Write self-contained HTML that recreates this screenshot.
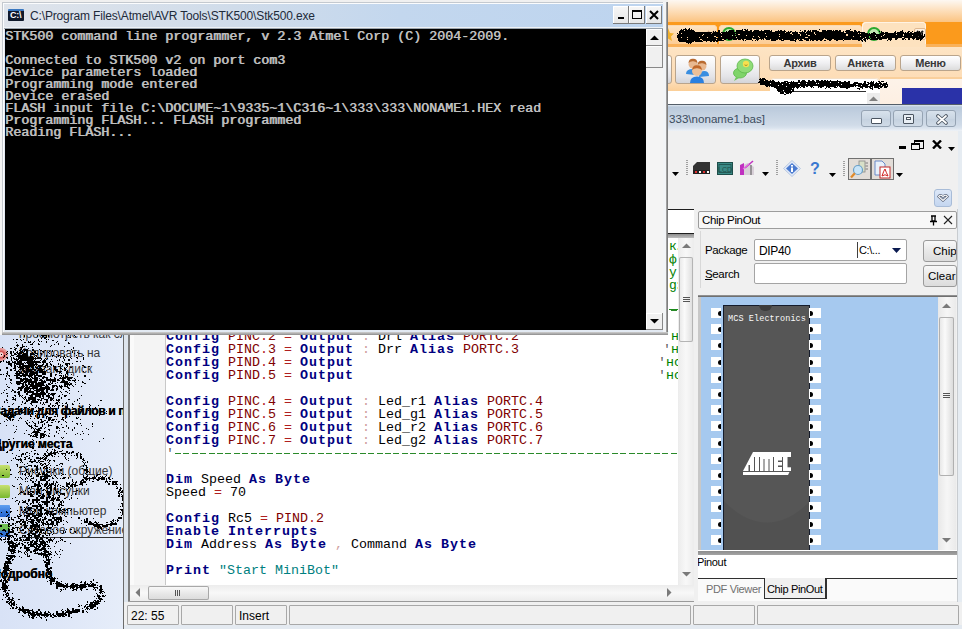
<!DOCTYPE html>
<html><head><meta charset="utf-8">
<style>
*{margin:0;padding:0;box-sizing:border-box}
html,body{width:962px;height:629px;overflow:hidden;background:#ececec;font-family:"Liberation Sans",sans-serif}
.a{position:absolute}
/* left explorer pane */
#xp{left:0;top:300px;width:123px;height:329px;background:linear-gradient(90deg,#d8e2f6,#e0e8f8 60%,#e6edf9);overflow:hidden}
.xt{font-size:12px;color:#383838;white-space:nowrap}
.xh{font:bold 12px "Liberation Sans",sans-serif;color:#000;white-space:nowrap;letter-spacing:0px;text-shadow:0.4px 0 0 #000}
/* editor window */
#ed{left:0;top:0;width:962px;height:629px}
#edtitle{left:544px;top:0;width:294px;height:27px;background:linear-gradient(#d5e2f2,#c7d8ee);border-top:1px solid #8c9cb1}
/* orange app */
#org{left:668px;top:0;width:294px;height:104px;background:#fdeee0}
/* console */
#con{left:0;top:0;width:668px;height:335px;background:#e2e9f2}
#contitle{left:4px;top:4px;width:660px;height:23px;background:linear-gradient(90deg,#dfe4eb 0%,#d0dcea 35%,#c3d7ee 60%,#bdd4ef 100%)}
#conbody{left:5px;top:29px;width:641px;height:301px;background:#000;font-family:"Liberation Mono",monospace;font-weight:normal;text-shadow:0.7px 0 0 #c0c0c0;font-size:13.333px;line-height:12px;color:#c0c0c0;white-space:pre;padding-top:2px}
.tbtn{top:6px;width:16px;height:18px;background:linear-gradient(#f7f7f7,#e6e6e6);box-shadow:inset -1px -1px 0 #7b7b7b,inset 1px 1px 0 #fff,0 0 0 0 #000}
#cscroll{left:646px;top:29px;width:17px;height:301px;background:#f4f4f4}
.sbtn{width:17px;height:17px;background:#f0f0f0;box-shadow:inset -1px -1px 0 #888,inset 1px 1px 0 #fff}

.ebtn{top:110px;width:30px;height:17px;border:1px solid #95a3b3;border-radius:3px;background:linear-gradient(#d8e2ec,#cad6e3 50%,#c4d1df 51%,#d0dbe7)}
#code{font-family:"Liberation Mono",monospace;font-size:13.333px;line-height:13px;color:#000;white-space:pre}
#code .k{color:#000080;font-weight:bold;letter-spacing:1px}
#code .p{color:#800000}
#code .o{color:#b02020}
#code .c{color:#d0a0a0}
#code .g{color:#008000}
#code .s{color:#008080}
#code .ap{color:#606060}
.dl{left:175px;width:503px;height:1px;background:repeating-linear-gradient(90deg,#2a8a2a 0 6px,transparent 6px 8.4px)}
.gc{font:13px "Liberation Mono",monospace;color:#008000;letter-spacing:-2px;white-space:nowrap;line-height:13px}
.sp{top:605px;height:20px;border:1px solid #a8a8a8;border-radius:1px;background:#f0f0f0;font-size:12px;color:#000;padding:3px 0 0 3px;white-space:nowrap}

.otab{top:25px;height:20px;background:linear-gradient(#fde4c4,#fccb92);border-radius:4px 4px 0 0;box-shadow:inset 0 0 0 1px #fbd9b0}
.otab.act{top:22px;height:25px;background:#fde2bf;box-shadow:inset 1px 1px 0 #fff3e3,inset -1px 0 0 #fff3e3}
.obtn{top:55px;height:29px;border-radius:3px;border:1px solid #b9a48c;background:linear-gradient(#ffffff,#f2f2f4 40%,#e4e4e8 75%,#d4d4d8)}
.obtxt{top:55px;height:16px;border-radius:3px;border:1px solid #b9a48c;background:linear-gradient(#ffffff,#f0f0f2 50%,#dcdcdc);font:bold 11px "Liberation Sans",sans-serif;color:#383838;text-align:center;line-height:14px;letter-spacing:-0.2px}

.grip{top:160px;width:2px;height:16px;background:repeating-linear-gradient(#a0a0a0 0 1px,transparent 1px 2px)}
.lbl{font-size:11px;letter-spacing:-0.35px;color:#000;white-space:nowrap}
.pbtn{width:34px;border:1px solid #9a9a9a;border-radius:3px;background:linear-gradient(#f8f8f8,#e8e8e8 50%,#dcdcdc);font-size:11.5px;padding:4px 0 0 8px;white-space:nowrap;overflow:hidden}
.pinl{left:10px;width:10px;height:10px;background:#fff;margin-top:-297px}
.pinl::after{content:"";position:absolute;left:7px;top:2.5px;width:3px;height:5px;border-radius:3px 0 0 3px;background:#000}
.pinr{left:108px;width:12px;height:10px;background:#fff;margin-top:-297px}
.pinr::after{content:"";position:absolute;left:1px;top:2.5px;width:3px;height:5px;border-radius:0 3px 3px 0;background:#000}
</style></head><body>
<div id="xp" class="a">
  <div class="a xt" style="left:19px;top:27px">просмотреть как слайд-шоу</div>
  <div class="a xt" style="left:19px;top:46px">Копировать на</div>
  <div class="a xt" style="left:19px;top:62px">компакт-диск</div>
  <div class="a xh" style="left:-7px;top:104px;letter-spacing:-0.35px">Задачи для файлов и папок</div>
  <div class="a xh" style="left:-7px;top:137px">Другие места</div>
  <div class="a xt" style="left:19px;top:164px">Рисунки (общие)</div>
  <div class="a xt" style="left:19px;top:184px">Мои рисунки</div>
  <div class="a xt" style="left:19px;top:204px">Мой компьютер</div>
  <div class="a xt" style="left:19px;top:223px">Сетевое окружение</div>
  <div class="a" style="left:19px;top:237px;width:104px;height:1px;background:#303030"></div>
  <div class="a xh" style="left:-8px;top:267px">Подробно</div>
  <div class="a" style="left:-6px;top:48px;width:14px;height:13px;border-radius:50%;background:radial-gradient(#f4d0d0 20%,#d04848 30%,#e8a0a0 60%,#c03030)"></div>
  <div class="a" style="left:-6px;top:165px;width:16px;height:13px;border-radius:2px;background:linear-gradient(#c8e070,#78b830)"></div>
  <div class="a" style="left:-6px;top:185px;width:16px;height:13px;border-radius:2px;background:linear-gradient(#c8e070,#78b830)"></div>
  <div class="a" style="left:-6px;top:205px;width:16px;height:12px;border-radius:1px;background:linear-gradient(#60a0f0,#2060d0)"></div>
  <div class="a" style="left:-6px;top:224px;width:16px;height:13px;border-radius:1px;background:linear-gradient(#70c050 40%,#3070d0 60%)"></div>
</div>
<div id="ed" class="a">
  <!-- title bar -->
  <div class="a" style="left:668px;top:104px;width:294px;height:1px;background:#545e69"></div>
  <div class="a" style="left:668px;top:105px;width:294px;height:26px;background:linear-gradient(#dfe7ef 0px,#b9c9db 2px,#c2d0e0 8px,#d0dbe8 20px,#dae3ee 23px,#eef2f7 26px)"></div>
  <div class="a" style="left:669px;top:112px;font-size:11.6px;color:#3b4b5d;white-space:nowrap">333\noname1.bas]</div>
  <div class="a ebtn" style="left:861px"><div class="a" style="left:9px;top:7px;width:11px;height:6px;border:1.5px solid #4a5460;border-radius:1px;background:#fff"></div></div>
  <div class="a ebtn" style="left:893px"><div class="a" style="left:9px;top:3px;width:11px;height:10px;border:1.5px solid #4a5460;border-radius:1px;background:#e8eef4"><div class="a" style="left:2px;top:2px;width:5px;height:3px;border:1px solid #4a5460;background:#fff"></div></div></div>
  <div class="a ebtn" style="left:926px"><svg class="a" style="left:9px;top:3px" width="12" height="11"><path d="M2 2L10 9M10 2L2 9" stroke="#4a5460" stroke-width="3.6" stroke-linecap="round"/><path d="M2 2L10 9M10 2L2 9" stroke="#fff" stroke-width="1.8" stroke-linecap="round"/></svg></div>
  <!-- toolbar -->
  <div class="a" style="left:668px;top:131px;width:290px;height:78px;background:#f0f0f0"></div>
  <div class="a" style="left:958px;top:131px;width:4px;height:498px;background:#e6ecf2"></div>
  <!-- editor body left of console -->
  <div class="a" style="left:123px;top:335px;width:1px;height:294px;background:#6b6b6b"></div>
  <div class="a" style="left:124px;top:335px;width:4px;height:294px;background:#dde4ec"></div>
  <div class="a" style="left:128px;top:209px;width:2px;height:393px;background:#7d7d7d"></div>
  <!-- doc tab strip -->
  <div class="a" style="left:668px;top:209px;width:28px;height:1px;background:#1e1e1e"></div>
  <div class="a" style="left:695px;top:209px;width:1px;height:3px;background:#1e1e1e"></div>
  <div class="a" style="left:668px;top:210px;width:28px;height:23px;background:#fff"></div>
  <div class="a" style="left:130px;top:233px;width:566px;height:1px;background:#1e1e1e"></div>
  <div class="a" style="left:130px;top:234px;width:566px;height:4px;background:linear-gradient(#8e8e8e,#bdbdbd)"></div>
  <!-- gutter and code -->
  <div class="a" style="left:130px;top:238px;width:36px;height:347px;background:#f4f4f4"></div>
  <div class="a" style="left:130px;top:238px;width:4px;height:347px;background:#fafafa"></div>
  <div class="a" style="left:165px;top:238px;width:1px;height:347px;background:#c8c8c8"></div>
  <div class="a" style="left:166px;top:238px;width:512px;height:347px;background:#fff;overflow:hidden">
    <div id="code" class="a" style="left:0;top:1px">




<span class="ap">'</span>

<span class="k">Config</span> <span class="p">PINC</span><span class="o">.</span><span class="p">2</span> <span class="o">=</span> <span class="k">Output</span> <span class="c">:</span> Drl <span class="k">Alias</span> <span class="p">PORTC</span><span class="o">.</span><span class="p">2</span>                  <span class="ap">'</span><span class="g">но</span>
<span class="k">Config</span> <span class="p">PINC</span><span class="o">.</span><span class="p">3</span> <span class="o">=</span> <span class="k">Output</span> <span class="c">:</span> Drr <span class="k">Alias</span> <span class="p">PORTC</span><span class="o">.</span><span class="p">3</span>                  <span class="ap">'</span><span class="g">но</span>
<span class="k">Config</span> <span class="p">PIND</span><span class="o">.</span><span class="p">4</span> <span class="o">=</span> <span class="k">Output</span>                                      <span class="ap">'</span><span class="g">нс</span>
<span class="k">Config</span> <span class="p">PIND</span><span class="o">.</span><span class="p">5</span> <span class="o">=</span> <span class="k">Output</span>                                      <span class="ap">'</span><span class="g">нс</span>

<span class="k">Config</span> <span class="p">PINC</span><span class="o">.</span><span class="p">4</span> <span class="o">=</span> <span class="k">Output</span> <span class="c">:</span> Led_r1 <span class="k">Alias</span> <span class="p">PORTC</span><span class="o">.</span><span class="p">4</span>
<span class="k">Config</span> <span class="p">PINC</span><span class="o">.</span><span class="p">5</span> <span class="o">=</span> <span class="k">Output</span> <span class="c">:</span> Led_g1 <span class="k">Alias</span> <span class="p">PORTC</span><span class="o">.</span><span class="p">5</span>
<span class="k">Config</span> <span class="p">PINC</span><span class="o">.</span><span class="p">6</span> <span class="o">=</span> <span class="k">Output</span> <span class="c">:</span> Led_r2 <span class="k">Alias</span> <span class="p">PORTC</span><span class="o">.</span><span class="p">6</span>
<span class="k">Config</span> <span class="p">PINC</span><span class="o">.</span><span class="p">7</span> <span class="o">=</span> <span class="k">Output</span> <span class="c">:</span> Led_g2 <span class="k">Alias</span> <span class="p">PORTC</span><span class="o">.</span><span class="p">7</span>
<span class="ap">'</span>

<span class="k">Dim</span> Speed <span class="k">As</span> <span class="k">Byte</span>
Speed <span class="o">=</span> 70

<span class="k">Config</span> Rc5 <span class="o">=</span> <span class="p">PIND</span><span class="o">.</span><span class="p">2</span>
<span class="k">Enable</span> <span class="k">Interrupts</span>
<span class="k">Dim</span> Address <span class="k">As</span> <span class="k">Byte</span> <span class="c">,</span> Command <span class="k">As</span> <span class="k">Byte</span>

<span class="k">Print</span> <span class="s">"Start MiniBot"</span></div>
  </div>
  <div class="a gc" style="left:669px;top:240px">к.</div>
  <div class="a gc" style="left:669px;top:253px">ф</div>
  <div class="a gc" style="left:669px;top:266px">у</div>
  <div class="a gc" style="left:669px;top:279px">g:</div>
  <div class="a" style="left:669px;top:309px;width:9px;height:1px;background:#1a8a1a"></div>
  <div class="a dl" style="top:310px"></div>
  <div class="a dl" style="top:453px"></div>
  <!-- vertical scrollbar -->
  <div class="a" style="left:678px;top:238px;width:16px;height:347px;background:linear-gradient(90deg,#ececec,#f8f8f8 50%,#ececec)"></div>
  <svg class="a" style="left:682px;top:243px" width="9" height="5"><path d="M0 5L4.5 0.5L9 5Z" fill="#7a7a7a"/></svg>
  <div class="a" style="left:679px;top:257px;width:14px;height:85px;background:linear-gradient(90deg,#e6e6e6,#fafafa 40%,#dcdcdc);box-shadow:inset 0 0 0 1px #b4b4b4;border-radius:2px"></div>
  <div class="a" style="left:683px;top:297px;width:7px;height:1px;background:#555;box-shadow:0 2px 0 #555,0 4px 0 #555"></div>
  <svg class="a" style="left:682px;top:572px" width="9" height="5"><path d="M0 0L4.5 4.5L9 0Z" fill="#7a7a7a"/></svg>
  <!-- horizontal scrollbar -->
  <div class="a" style="left:130px;top:585px;width:564px;height:16px;background:linear-gradient(#ececec,#f8f8f8 50%,#ececec)"></div>
  <svg class="a" style="left:135px;top:588px" width="5" height="9"><path d="M5 0L0.5 4.5L5 9Z" fill="#7a7a7a"/></svg>
  <div class="a" style="left:148px;top:586px;width:61px;height:14px;background:linear-gradient(#fafafa,#e6e6e6 60%,#dadada);box-shadow:inset 0 0 0 1px #a8a8a8;border-radius:2px"></div>
  <div class="a" style="left:175px;top:590px;width:1px;height:6px;background:#555;box-shadow:2px 0 0 #555,4px 0 0 #555"></div>
  <svg class="a" style="left:667px;top:588px" width="5" height="9"><path d="M0 0L4.5 4.5L0 9Z" fill="#7a7a7a"/></svg>
  <div class="a" style="left:128px;top:601px;width:570px;height:1px;background:#9a9a9a"></div>
  <!-- status bar -->
  <div class="a" style="left:124px;top:602px;width:838px;height:27px;background:#f0f0f0"></div>
  <div class="a sp" style="left:127px;width:52px"><span>22: 55</span></div>
  <div class="a sp" style="left:181px;width:52px"></div>
  <div class="a sp" style="left:235px;width:52px"><span>Insert</span></div>
  <div class="a sp" style="left:289px;width:402px"></div>
  <div class="a sp" style="left:693px;width:62px"></div>
  <div class="a sp" style="left:757px;width:202px"></div>
  <div class="a" style="left:124px;top:625px;width:838px;height:4px;background:#e4eaf1"></div>
  <!-- toolbar icons -->
  <svg class="a" style="left:672px;top:172px" width="7" height="4"><path d="M0 0H7L3.5 4Z" fill="#000"/></svg>
  <div class="a grip" style="left:686px"></div>
  <svg class="a" style="left:693px;top:162px" width="18" height="13" viewBox="0 0 18 13"><path d="M4 0H17V8H0V4Z" fill="#333"/><path d="M0 8H17V12H0Z" fill="#222"/><rect x="2" y="9" width="2" height="2" fill="#e03030"/><rect x="6" y="9" width="2" height="2" fill="#fff"/><rect x="10" y="9" width="2" height="2" fill="#e03030"/><rect x="14" y="9" width="2" height="2" fill="#fff"/></svg>
  <svg class="a" style="left:717px;top:162px" width="16" height="13" viewBox="0 0 16 13"><rect x="0.5" y="0.5" width="15" height="12" fill="#3a8a86" stroke="#1e4e4a"/><rect x="2" y="2.5" width="12" height="8" fill="none" stroke="#1e4e4a" stroke-width="0.8"/><text x="8" y="9.5" font-size="7" font-family="Liberation Sans" text-anchor="middle" fill="#1e4e4a">LCD</text></svg>
  <svg class="a" style="left:739px;top:160px" width="17" height="16" viewBox="0 0 17 16"><path d="M1 6L9 3L15 7V15H3Z" fill="#d8d0d8"/><path d="M1 5L5 3V15H1Z" fill="#c030c0"/><path d="M6 8L14 1" stroke="#c030c0" stroke-width="1.5"/><path d="M12 5V15" stroke="#555" stroke-width="1"/><path d="M4 9L10 4" stroke="#e070e0" stroke-width="1.2"/></svg>
  <svg class="a" style="left:762px;top:172px" width="7" height="4"><path d="M0 0H7L3.5 4Z" fill="#000"/></svg>
  <div class="a grip" style="left:776px"></div>
  <svg class="a" style="left:783px;top:160px" width="18" height="17" viewBox="0 0 18 17"><path d="M9 0.5L17.5 8.5L9 16.5L0.5 8.5Z" fill="#dfe8f8" stroke="#b8c8e0"/><path d="M9 3L15 8.5L9 14L3 8.5Z" fill="#4a7ad0"/><rect x="8" y="7.5" width="2" height="4.5" fill="#fff"/><rect x="8" y="5" width="2" height="1.6" fill="#fff"/></svg>
  <div class="a" style="left:810px;top:160px;font:bold 16px 'Liberation Sans',sans-serif;color:#3a78d0">?</div>
  <svg class="a" style="left:829px;top:173px" width="7" height="4"><path d="M0 0H7L3.5 4Z" fill="#000"/></svg>
  <div class="a grip" style="left:843px;top:161px"></div>
  <div class="a" style="left:848px;top:158px;width:23px;height:22px;background:#e2ddd8;border:1px solid #707070"></div>
  <svg class="a" style="left:850px;top:160px" width="19" height="19" viewBox="0 0 19 19"><rect x="9" y="1" width="6" height="11" fill="#d8e0c8" stroke="#888" stroke-width="0.8"/><path d="M15.5 3H18M15.5 6H18M15.5 9H18" stroke="#666" stroke-width="0.8"/><circle cx="8" cy="10" r="4.5" fill="#c8e4f8" stroke="#6aa0c8" stroke-width="1.2"/><path d="M4.8 13.2L1 17.5" stroke="#e08a2a" stroke-width="2.2"/></svg>
  <div class="a" style="left:871px;top:158px;width:23px;height:22px;background:#e2ddd8;border:1px solid #707070"></div>
  <svg class="a" style="left:873px;top:160px" width="19" height="19" viewBox="0 0 19 19"><path d="M2 1H9L12 4V15H2Z" fill="#e8f0fa" stroke="#6a8ac8"/><rect x="7" y="7" width="10" height="11" fill="#fff" stroke="#c02828"/><path d="M9 16Q11 10 12 9Q13 12 15 16Q12 13.5 9 16Z" fill="none" stroke="#d02020" stroke-width="1"/></svg>
  <svg class="a" style="left:896px;top:173px" width="7" height="4"><path d="M0 0H7L3.5 4Z" fill="#000"/></svg>
  <!-- mdi buttons -->
  <div class="a" style="left:899px;top:146px;width:7px;height:3px;background:#000"></div>
  <div class="a" style="left:914px;top:140px;width:10px;height:9px;border:1.5px solid #000;border-top-width:2px;background:#f0f0f0"></div>
  <div class="a" style="left:911px;top:143px;width:9px;height:7px;border:1.5px solid #000;border-top-width:2px;background:#f0f0f0"></div>
  <svg class="a" style="left:932px;top:140px" width="10" height="9"><path d="M1 0.5L9 8.5M9 0.5L1 8.5" stroke="#000" stroke-width="2.4"/></svg>
  <svg class="a" style="left:948px;top:147px" width="7" height="4"><path d="M0 0H7L3.5 4Z" fill="#000"/></svg>
  <div class="a" style="left:934px;top:189px;width:18px;height:18px;border-radius:3px;background:linear-gradient(#dde8f8,#c4d6f0);border:1px solid #a8bcd8"></div>
  <svg class="a" style="left:937px;top:193px" width="12" height="9"><path d="M1.5 3.5Q3 1 6 3.5Q9 1 10.5 3.5L6 7.5Z" fill="none" stroke="#5a6478" stroke-width="2.4"/><path d="M1.5 3.5Q3 1 6 3.5Q9 1 10.5 3.5L6 7.5Z" fill="none" stroke="#fff" stroke-width="1.1"/></svg>
  <!-- chip pinout panel -->
  <div class="a" style="left:698px;top:209px;width:260px;height:393px;background:#f0f0f0"></div>
  <div class="a" style="left:698px;top:211px;width:259px;height:18px;background:#f7f7f7;border:1px solid #9c9c9c;border-radius:2px"></div>
  <div class="a lbl" style="left:702px;top:214px;font-size:11.5px">Chip PinOut</div>
  <svg class="a" style="left:929px;top:215px" width="9" height="11"><path d="M2 1H7M3 1V6H6V1M1 6.5H8M4.5 6.5V10.5" stroke="#000" stroke-width="1.3" fill="none"/></svg>
  <svg class="a" style="left:943px;top:215px" width="10" height="10"><path d="M1 1L9 9M9 1L1 9" stroke="#222" stroke-width="1.1"/></svg>
  <div class="a" style="left:700px;top:231px;width:1px;height:66px;background:#d8d8d8"></div>
  <div class="a lbl" style="left:705px;top:244px;font-size:11.5px">Package</div>
  <div class="a lbl" style="left:705px;top:268px;font-size:11.5px"><u>S</u>earch</div>
  <div class="a" style="left:754px;top:239px;width:153px;height:22px;background:#fff;border:1px solid #a4a4a4;border-radius:2px"></div>
  <div class="a lbl" style="left:759px;top:244px;font-size:12px">DIP40</div>
  <div class="a" style="left:857px;top:242px;width:1px;height:16px;background:#404040"></div>
  <div class="a lbl" style="left:859px;top:244px">C:\...</div>
  <svg class="a" style="left:892px;top:248px" width="9" height="5"><path d="M0 0H9L4.5 5Z" fill="#0a1a50"/></svg>
  <div class="a" style="left:754px;top:263px;width:153px;height:21px;background:#fff;border:1px solid #a4a4a4;border-radius:2px"></div>
  <div class="a pbtn" style="left:923px;top:240px;height:22px;padding-left:9px">Chip</div>
  <div class="a pbtn" style="left:923px;top:265px;height:22px;padding-left:4px">Clear</div>
  <div class="a" style="left:698px;top:288px;width:260px;height:8px;background:#f0f0f0"></div>
  <div class="a" style="left:698px;top:295px;width:259px;height:2px;background:linear-gradient(#a0a0a0,#606060)"></div>
  <!-- chip view -->
  <div class="a" style="left:698px;top:297px;width:3px;height:254px;background:#c8c8c8"></div>
  <div class="a" style="left:701px;top:297px;width:237px;height:253px;background:#a6c9ef;overflow:hidden">
    <div class="a" style="left:22px;top:8px;width:87px;height:260px;background:radial-gradient(ellipse 100px 222px at 43px -5px,#565656 99.5%,#515151 100%);border:1px solid #151c2c;border-bottom:none"></div>
    <div class="a" style="left:58px;top:8px;width:13px;height:6px;border-radius:0 0 7px 7px;background:#3c3c3c"></div>
    <div class="a" style="left:27px;top:17px;font:8.5px 'Liberation Mono',monospace;color:#fafafa;letter-spacing:0.1px;white-space:nowrap">MCS Electronics</div>
    <svg class="a" style="left:42px;top:155px" width="49" height="24" viewBox="0 0 49 24">
      <path d="M10 0H48V19H0Z" fill="#fff"/>

      <path d="M5.5 13H7V19H5.5Z" fill="#555"/>
      <path d="M11 5H12V19H11ZM16 5H17V19H16ZM20.5 7H21.5V19H20.5ZM25.5 7H26.5V19H25.5ZM30 5H31V19H30ZM39 5H40V19H39Z" fill="#555"/>
      <path d="M35 8.5H39V10H35ZM35 13.5H39V15H35Z" fill="#555"/>
      <path d="M44.5 5H48V15.3H44.5Z" fill="#555"/>
      <path d="M0 20H46.5L45 23H0Z" fill="#fff"/>
    </svg>
    <div class="a pinl" style="top:308px"></div><div class="a pinr" style="top:308px"></div>
<div class="a pinl" style="top:324px"></div><div class="a pinr" style="top:324px"></div>
<div class="a pinl" style="top:340px"></div><div class="a pinr" style="top:340px"></div>
<div class="a pinl" style="top:357px"></div><div class="a pinr" style="top:357px"></div>
<div class="a pinl" style="top:373px"></div><div class="a pinr" style="top:373px"></div>
<div class="a pinl" style="top:389px"></div><div class="a pinr" style="top:389px"></div>
<div class="a pinl" style="top:405px"></div><div class="a pinr" style="top:405px"></div>
<div class="a pinl" style="top:421px"></div><div class="a pinr" style="top:421px"></div>
<div class="a pinl" style="top:438px"></div><div class="a pinr" style="top:438px"></div>
<div class="a pinl" style="top:454px"></div><div class="a pinr" style="top:454px"></div>
<div class="a pinl" style="top:470px"></div><div class="a pinr" style="top:470px"></div>
<div class="a pinl" style="top:486px"></div><div class="a pinr" style="top:486px"></div>
<div class="a pinl" style="top:502px"></div><div class="a pinr" style="top:502px"></div>
<div class="a pinl" style="top:519px"></div><div class="a pinr" style="top:519px"></div>
<div class="a pinl" style="top:535px"></div><div class="a pinr" style="top:535px"></div>
  </div>
  <div class="a" style="left:938px;top:297px;width:18px;height:253px;background:linear-gradient(90deg,#e8e8e8,#f6f6f6 50%,#eaeaea)"></div>
  <svg class="a" style="left:942px;top:303px" width="9" height="5"><path d="M0 5L4.5 0.5L9 5Z" fill="#7a7a7a"/></svg>
  <div class="a" style="left:939px;top:317px;width:15px;height:159px;background:linear-gradient(90deg,#e4e4e4,#fafafa 40%,#d8d8d8);box-shadow:inset 0 0 0 1px #b0b0b0;border-radius:2px"></div>
  <div class="a" style="left:943px;top:393px;width:7px;height:1px;background:#555;box-shadow:0 2px 0 #555,0 4px 0 #555"></div>
  <svg class="a" style="left:942px;top:538px" width="9" height="5"><path d="M0 0L4.5 4.5L9 0Z" fill="#7a7a7a"/></svg>
  <div class="a" style="left:698px;top:550px;width:259px;height:1px;background:#fff"></div>
  <div class="a" style="left:698px;top:551px;width:259px;height:4px;background:linear-gradient(#8c8c8c,#a4a4a4)"></div>
  <div class="a" style="left:697px;top:555px;width:260px;height:24px;background:#fff"></div>
  <div class="a lbl" style="left:697px;top:556px">Pinout</div>
  <div class="a" style="left:697px;top:578px;width:67px;height:1px;background:#303030"></div>
  <div class="a" style="left:826px;top:578px;width:131px;height:1px;background:#303030"></div>
  <div class="a" style="left:697px;top:579px;width:260px;height:22px;background:#fafafa"></div>
  <div class="a lbl" style="left:706px;top:583px;color:#707070">PDF Viewer</div>
  <div class="a" style="left:764px;top:578px;width:63px;height:21px;background:#f0f0f0;border-left:1px solid #303030;border-right:2px solid #303030;border-bottom:1px solid #303030"></div>
  <div class="a lbl" style="left:767px;top:583px">Chip PinOut</div>
  <div class="a" style="left:957px;top:209px;width:1px;height:393px;background:#c8ccd0"></div>
  <!-- splitter -->
  <div class="a" style="left:694px;top:209px;width:4px;height:393px;background:#f0f0f0"></div>
</div>
<div id="org" class="a">
  <div class="a" style="left:0;top:0;width:294px;height:23px;background:linear-gradient(#fdf8f2,#fde2c2 40%,#fbc482 95%)"></div>
  <div class="a" style="left:0;top:22px;width:294px;height:24px;background:#fb9a1c"></div>
  <!-- tabs -->
  <div class="a otab" style="left:-6px;width:55px"></div>
  <div class="a otab" style="left:51px;width:143px"></div>
  <div class="a otab act" style="left:194px;width:64px"></div>
  <div class="a" style="left:0;top:44px;width:294px;height:3px;background:#f9b15a"></div>
  <div class="a" style="left:194px;top:44px;width:64px;height:3px;background:#fde2bf"></div>
  <div class="a" style="left:0;top:47px;width:294px;height:44px;background:linear-gradient(#fde4c4,#fddcb5 80%,#fbcf98)"></div>
  <!-- star -->
  <svg class="a" style="left:-6px;top:27px" width="12" height="14"><path d="M6 1L8 6L12 6.5L9 9.5L10 14L6 11.5L2 14L3 9.5L0 6.5L4 6Z" fill="#f2b02a"/></svg>
  <svg class="a" style="left:38px;top:29px" width="10" height="10"><path d="M2 2L8 8M8 2L2 8" stroke="#c8a080" stroke-width="1.5"/></svg>
  <!-- green icon -->
  <div class="a" style="left:54px;top:27px;width:14px;height:14px;border-radius:50%;border:2.5px solid #2aa830;background:radial-gradient(#2aa830 25%,#bfe8b0 30%)"></div>
  <div class="a" style="left:199px;top:27px;width:14px;height:14px;border-radius:50%;border:2.5px solid #2aa830;background:radial-gradient(#2aa830 25%,#bfe8b0 30%)"></div>
  <div class="a" style="left:246px;top:28px;width:12px;height:12px;border:1px solid #e0b890;border-radius:2px;background:#fdf0e0"></div>
  <svg class="a" style="left:247px;top:29px" width="10" height="10"><path d="M2 2L8 8M8 2L2 8" stroke="#202020" stroke-width="2"/></svg>
  <!-- buttons -->
  <div class="a obtn" style="left:-10px;width:14px"></div>
  <div class="a obtn" style="left:7px;width:41px"></div>
  <div class="a obtn" style="left:52px;width:40px"></div>
  <div class="a obtxt" style="left:101px;width:62px">Архив</div>
  <div class="a obtxt" style="left:167px;width:61px">Анкета</div>
  <div class="a obtxt" style="left:232px;width:61px">Меню</div>
  <!-- people icon -->
  <svg class="a" style="left:17px;top:57px" width="24" height="26" viewBox="0 0 24 26">
    <circle cx="8" cy="7" r="4.5" fill="#e8b890"/><path d="M3.5 6Q4 1.5 8 1.8Q12 1.5 12.5 6Q10 4 8 4.2Q5 4 3.5 6Z" fill="#b86a30"/>
    <path d="M1 17Q1 12 8 12Q11 12 12 14L10 18Z" fill="#3a8ee0"/>
    <circle cx="17" cy="9" r="4.5" fill="#e8b890"/><path d="M12.5 8Q13 3.5 17 3.8Q21 3.5 21.5 8Q19 6 17 6.2Q14 6 12.5 8Z" fill="#b86a30"/>
    <path d="M14 20Q14 14 19 14Q24 14 24 19Z" fill="#3a8ee0"/>
    <circle cx="12" cy="14" r="5" fill="#edc098"/><path d="M7 13Q7.5 8 12 8.3Q16.5 8 17 13Q14.5 11 12 11.2Q9 11 7 13Z" fill="#c0682a"/>
    <path d="M5 26Q5 19.5 12 19.5Q19 19.5 19 26Z" fill="#2a80e0"/>
  </svg>
  <!-- chat icon -->
  <svg class="a" style="left:64px;top:58px" width="22" height="24" viewBox="0 0 22 24">
    <ellipse cx="8" cy="15" rx="6.5" ry="5" fill="#7fd46a" stroke="#5cb84a" stroke-width="0.8"/>
    <path d="M4 19L2 23L7 20Z" fill="#6cc85a"/>
    <ellipse cx="13" cy="8" rx="8" ry="7" fill="#90dc78" stroke="#5cb84a" stroke-width="0.8"/>
    <circle cx="14" cy="6" r="3.2" fill="#f6e050"/>
    <path d="M12.5 6.8Q14 8.3 15.5 6.8" stroke="#8a6a10" stroke-width="0.7" fill="none"/>
  </svg>
  <!-- scribbled input -->
  <div class="a" style="left:0;top:91px;width:294px;height:13px;background:#fff"></div>
  <div class="a" style="left:212px;top:77px;width:82px;height:2px;background:#f9cf9c"></div>
  <div class="a" style="left:212px;top:79px;width:82px;height:25px;background:linear-gradient(#fdf3e9,#fdefe2)"></div>
  <div class="a" style="left:234px;top:88px;width:60px;height:16px;background:#2a32a8"></div>
  <div class="a" style="left:102px;top:78px;width:110px;height:26px;background:#fff;border-radius:5px 5px 0 0;box-shadow:inset 0 1px 0 #f4e0c8"></div>
  <div class="a" style="left:112px;top:91px;width:86px;height:1px;background:#303030"></div>
  <div class="a" style="left:199px;top:93px;width:13px;height:11px;background:#ececec"></div>
  <svg class="a" style="left:201px;top:96px" width="9" height="5"><path d="M0 5L4.5 0.5L9 5Z" fill="#808080"/></svg>
  <div class="a" style="left:0;top:104px;width:294px;height:1px;background:#545e69"></div>
</div>
<svg class="a" id="scrib" style="left:0;top:0" width="962" height="629"><path d="M12 333h1v1h-1zM40 333h10v1h-10zM40 334h9v1h-9zM65 334h1v1h-1zM24 335h1v1h-1zM37 335h1v1h-1zM41 335h6v1h-6zM48 335h1v1h-1zM68 335h1v1h-1zM74 335h1v1h-1zM24 336h1v1h-1zM37 336h1v1h-1zM42 336h2v1h-2zM46 336h1v1h-1zM48 336h1v1h-1zM75 336h1v1h-1zM44 337h3v1h-3zM70 337h1v1h-1zM41 338h1v1h-1zM44 338h2v1h-2zM13 339h1v1h-1zM16 339h2v1h-2zM20 339h1v1h-1zM23 339h1v1h-1zM38 339h1v1h-1zM46 339h1v1h-1zM48 339h1v1h-1zM21 340h1v1h-1zM38 340h1v1h-1zM52 340h2v1h-2zM65 340h1v1h-1zM28 341h1v1h-1zM30 341h1v1h-1zM34 341h1v1h-1zM39 341h1v1h-1zM41 341h1v1h-1zM46 341h1v1h-1zM57 341h1v1h-1zM16 342h1v1h-1zM24 342h2v1h-2zM28 342h3v1h-3zM33 342h1v1h-1zM46 342h1v1h-1zM56 342h1v1h-1zM68 342h1v1h-1zM32 343h1v1h-1zM38 343h1v1h-1zM58 343h1v1h-1zM68 343h2v1h-2zM17 344h1v1h-1zM22 344h1v1h-1zM30 344h3v1h-3zM38 344h2v1h-2zM54 344h1v1h-1zM58 344h1v1h-1zM16 345h3v1h-3zM22 345h1v1h-1zM51 345h1v1h-1zM17 346h1v1h-1zM22 346h3v1h-3zM26 346h1v1h-1zM50 346h1v1h-1zM64 346h1v1h-1zM2 347h1v1h-1zM14 347h1v1h-1zM20 347h3v1h-3zM32 347h1v1h-1zM73 347h1v1h-1zM10 348h2v1h-2zM15 348h2v1h-2zM21 348h1v1h-1zM28 348h1v1h-1zM73 348h1v1h-1zM14 349h2v1h-2zM20 349h2v1h-2zM23 349h5v1h-5zM32 349h2v1h-2zM39 349h1v1h-1zM71 349h1v1h-1zM15 350h1v1h-1zM19 350h2v1h-2zM22 350h1v1h-1zM24 350h4v1h-4zM32 350h2v1h-2zM40 350h2v1h-2zM45 350h1v1h-1zM52 350h1v1h-1zM67 350h1v1h-1zM7 351h1v1h-1zM10 351h2v1h-2zM13 351h1v1h-1zM17 351h1v1h-1zM20 351h3v1h-3zM24 351h1v1h-1zM26 351h2v1h-2zM34 351h2v1h-2zM42 351h2v1h-2zM49 351h1v1h-1zM52 351h1v1h-1zM72 351h1v1h-1zM6 352h1v1h-1zM10 352h2v1h-2zM13 352h1v1h-1zM16 352h2v1h-2zM19 352h5v1h-5zM26 352h2v1h-2zM32 352h1v1h-1zM34 352h2v1h-2zM43 352h1v1h-1zM48 352h1v1h-1zM72 352h1v1h-1zM77 352h1v1h-1zM7 353h1v1h-1zM10 353h2v1h-2zM14 353h2v1h-2zM17 353h5v1h-5zM23 353h5v1h-5zM30 353h4v1h-4zM35 353h3v1h-3zM40 353h2v1h-2zM49 353h1v1h-1zM74 353h1v1h-1zM78 353h2v1h-2zM1 354h1v1h-1zM6 354h1v1h-1zM11 354h1v1h-1zM14 354h3v1h-3zM18 354h2v1h-2zM22 354h6v1h-6zM30 354h5v1h-5zM37 354h1v1h-1zM41 354h1v1h-1zM56 354h1v1h-1zM4 355h1v1h-1zM11 355h3v1h-3zM17 355h11v1h-11zM30 355h1v1h-1zM35 355h2v1h-2zM46 355h1v1h-1zM52 355h2v1h-2zM58 355h2v1h-2zM64 355h1v1h-1zM76 355h1v1h-1zM83 355h1v1h-1zM4 356h1v1h-1zM10 356h1v1h-1zM16 356h12v1h-12zM30 356h3v1h-3zM34 356h1v1h-1zM36 356h1v1h-1zM46 356h1v1h-1zM52 356h1v1h-1zM58 356h1v1h-1zM64 356h1v1h-1zM67 356h1v1h-1zM3 357h1v1h-1zM6 357h2v1h-2zM11 357h1v1h-1zM13 357h1v1h-1zM18 357h16v1h-16zM35 357h1v1h-1zM37 357h4v1h-4zM56 357h1v1h-1zM60 357h1v1h-1zM63 357h1v1h-1zM65 357h1v1h-1zM70 357h1v1h-1zM76 357h2v1h-2zM83 357h1v1h-1zM7 358h1v1h-1zM11 358h1v1h-1zM13 358h2v1h-2zM16 358h1v1h-1zM18 358h24v1h-24zM45 358h1v1h-1zM47 358h1v1h-1zM63 358h1v1h-1zM71 358h1v1h-1zM77 358h1v1h-1zM83 358h1v1h-1zM11 359h1v1h-1zM14 359h5v1h-5zM20 359h14v1h-14zM35 359h1v1h-1zM41 359h1v1h-1zM44 359h1v1h-1zM46 359h1v1h-1zM51 359h1v1h-1zM59 359h1v1h-1zM64 359h1v1h-1zM68 359h2v1h-2zM83 359h1v1h-1zM3 360h1v1h-1zM11 360h1v1h-1zM16 360h2v1h-2zM19 360h14v1h-14zM34 360h1v1h-1zM40 360h1v1h-1zM43 360h3v1h-3zM57 360h1v1h-1zM59 360h1v1h-1zM64 360h1v1h-1zM68 360h2v1h-2zM0 361h2v1h-2zM3 361h1v1h-1zM6 361h1v1h-1zM8 361h2v1h-2zM12 361h1v1h-1zM14 361h2v1h-2zM17 361h5v1h-5zM27 361h13v1h-13zM42 361h4v1h-4zM50 361h1v1h-1zM52 361h1v1h-1zM62 361h1v1h-1zM76 361h2v1h-2zM80 361h1v1h-1zM0 362h1v1h-1zM6 362h4v1h-4zM12 362h4v1h-4zM17 362h5v1h-5zM24 362h1v1h-1zM26 362h15v1h-15zM42 362h4v1h-4zM49 362h1v1h-1zM63 362h1v1h-1zM8 363h4v1h-4zM14 363h10v1h-10zM25 363h1v1h-1zM27 363h7v1h-7zM35 363h2v1h-2zM43 363h1v1h-1zM46 363h2v1h-2zM50 363h1v1h-1zM58 363h1v1h-1zM65 363h5v1h-5zM72 363h1v1h-1zM8 364h4v1h-4zM14 364h1v1h-1zM16 364h8v1h-8zM28 364h10v1h-10zM42 364h2v1h-2zM46 364h2v1h-2zM50 364h2v1h-2zM58 364h1v1h-1zM60 364h1v1h-1zM65 364h3v1h-3zM69 364h1v1h-1zM10 365h2v1h-2zM14 365h2v1h-2zM19 365h2v1h-2zM22 365h13v1h-13zM36 365h1v1h-1zM38 365h5v1h-5zM45 365h3v1h-3zM51 365h1v1h-1zM53 365h1v1h-1zM60 365h1v1h-1zM62 365h1v1h-1zM66 365h2v1h-2zM82 365h2v1h-2zM11 366h1v1h-1zM14 366h2v1h-2zM17 366h1v1h-1zM19 366h15v1h-15zM35 366h1v1h-1zM38 366h4v1h-4zM44 366h2v1h-2zM47 366h1v1h-1zM53 366h3v1h-3zM58 366h2v1h-2zM67 366h1v1h-1zM84 366h1v1h-1zM88 366h2v1h-2zM6 367h2v1h-2zM14 367h2v1h-2zM18 367h6v1h-6zM25 367h5v1h-5zM31 367h3v1h-3zM35 367h3v1h-3zM39 367h2v1h-2zM45 367h1v1h-1zM54 367h2v1h-2zM60 367h1v1h-1zM64 367h1v1h-1zM66 367h1v1h-1zM70 367h2v1h-2zM84 367h2v1h-2zM6 368h2v1h-2zM13 368h3v1h-3zM20 368h5v1h-5zM26 368h3v1h-3zM32 368h2v1h-2zM36 368h6v1h-6zM44 368h1v1h-1zM49 368h1v1h-1zM54 368h2v1h-2zM60 368h2v1h-2zM64 368h2v1h-2zM0 369h1v1h-1zM10 369h2v1h-2zM15 369h1v1h-1zM19 369h2v1h-2zM22 369h2v1h-2zM26 369h10v1h-10zM38 369h6v1h-6zM54 369h4v1h-4zM62 369h1v1h-1zM65 369h1v1h-1zM0 370h1v1h-1zM10 370h2v1h-2zM14 370h2v1h-2zM18 370h1v1h-1zM22 370h3v1h-3zM26 370h6v1h-6zM34 370h2v1h-2zM37 370h6v1h-6zM46 370h1v1h-1zM55 370h3v1h-3zM64 370h2v1h-2zM67 370h1v1h-1zM7 371h1v1h-1zM16 371h4v1h-4zM21 371h1v1h-1zM23 371h11v1h-11zM36 371h2v1h-2zM39 371h7v1h-7zM56 371h6v1h-6zM66 371h2v1h-2zM83 371h1v1h-1zM7 372h1v1h-1zM16 372h2v1h-2zM19 372h3v1h-3zM24 372h4v1h-4zM30 372h8v1h-8zM39 372h7v1h-7zM59 372h2v1h-2zM66 372h2v1h-2zM6 373h2v1h-2zM15 373h9v1h-9zM25 373h3v1h-3zM29 373h9v1h-9zM42 373h4v1h-4zM50 373h2v1h-2zM59 373h1v1h-1zM61 373h1v1h-1zM66 373h2v1h-2zM0 374h2v1h-2zM3 374h1v1h-1zM7 374h1v1h-1zM16 374h4v1h-4zM22 374h6v1h-6zM29 374h6v1h-6zM36 374h2v1h-2zM42 374h4v1h-4zM50 374h2v1h-2zM55 374h2v1h-2zM65 374h1v1h-1zM67 374h1v1h-1zM71 374h1v1h-1zM6 375h1v1h-1zM8 375h2v1h-2zM14 375h19v1h-19zM34 375h8v1h-8zM50 375h2v1h-2zM55 375h1v1h-1zM59 375h3v1h-3zM63 375h1v1h-1zM65 375h1v1h-1zM84 375h2v1h-2zM6 376h1v1h-1zM9 376h1v1h-1zM16 376h2v1h-2zM20 376h2v1h-2zM23 376h3v1h-3zM28 376h4v1h-4zM34 376h2v1h-2zM38 376h4v1h-4zM43 376h2v1h-2zM50 376h2v1h-2zM61 376h1v1h-1zM63 376h1v1h-1zM65 376h3v1h-3zM77 376h1v1h-1zM84 376h2v1h-2zM16 377h4v1h-4zM25 377h1v1h-1zM29 377h1v1h-1zM31 377h2v1h-2zM34 377h4v1h-4zM42 377h6v1h-6zM54 377h1v1h-1zM60 377h1v1h-1zM62 377h11v1h-11zM5 378h1v1h-1zM9 378h1v1h-1zM16 378h6v1h-6zM23 378h5v1h-5zM30 378h1v1h-1zM32 378h6v1h-6zM39 378h1v1h-1zM42 378h2v1h-2zM46 378h2v1h-2zM50 378h1v1h-1zM54 378h2v1h-2zM59 378h7v1h-7zM67 378h5v1h-5zM74 378h1v1h-1zM5 379h1v1h-1zM10 379h2v1h-2zM20 379h12v1h-12zM34 379h4v1h-4zM40 379h2v1h-2zM46 379h10v1h-10zM57 379h2v1h-2zM62 379h2v1h-2zM67 379h3v1h-3zM75 379h1v1h-1zM89 379h1v1h-1zM10 380h2v1h-2zM20 380h4v1h-4zM25 380h7v1h-7zM34 380h4v1h-4zM39 380h4v1h-4zM44 380h1v1h-1zM46 380h10v1h-10zM57 380h3v1h-3zM62 380h3v1h-3zM68 380h3v1h-3zM72 380h4v1h-4zM78 380h1v1h-1zM16 381h7v1h-7zM24 381h13v1h-13zM41 381h5v1h-5zM50 381h1v1h-1zM52 381h4v1h-4zM61 381h7v1h-7zM74 381h1v1h-1zM82 381h1v1h-1zM10 382h1v1h-1zM16 382h5v1h-5zM23 382h4v1h-4zM28 382h9v1h-9zM38 382h8v1h-8zM50 382h1v1h-1zM52 382h1v1h-1zM57 382h1v1h-1zM60 382h8v1h-8zM69 382h1v1h-1zM75 382h1v1h-1zM82 382h2v1h-2zM11 383h1v1h-1zM16 383h8v1h-8zM25 383h1v1h-1zM28 383h2v1h-2zM31 383h3v1h-3zM35 383h9v1h-9zM48 383h2v1h-2zM51 383h2v1h-2zM55 383h1v1h-1zM64 383h5v1h-5zM70 383h2v1h-2zM84 383h2v1h-2zM6 384h1v1h-1zM17 384h3v1h-3zM22 384h2v1h-2zM25 384h2v1h-2zM28 384h6v1h-6zM35 384h9v1h-9zM46 384h1v1h-1zM48 384h3v1h-3zM64 384h8v1h-8zM75 384h1v1h-1zM22 385h2v1h-2zM25 385h3v1h-3zM30 385h15v1h-15zM46 385h2v1h-2zM52 385h5v1h-5zM59 385h1v1h-1zM61 385h1v1h-1zM64 385h2v1h-2zM67 385h1v1h-1zM69 385h1v1h-1zM72 385h1v1h-1zM7 386h1v1h-1zM21 386h4v1h-4zM26 386h2v1h-2zM29 386h13v1h-13zM45 386h4v1h-4zM52 386h3v1h-3zM56 386h2v1h-2zM59 386h4v1h-4zM64 386h4v1h-4zM73 386h1v1h-1zM81 386h1v1h-1zM8 387h2v1h-2zM18 387h6v1h-6zM25 387h5v1h-5zM32 387h6v1h-6zM40 387h10v1h-10zM52 387h2v1h-2zM57 387h1v1h-1zM60 387h2v1h-2zM67 387h2v1h-2zM18 388h5v1h-5zM24 388h14v1h-14zM39 388h11v1h-11zM52 388h1v1h-1zM56 388h2v1h-2zM61 388h1v1h-1zM68 388h2v1h-2zM6 389h1v1h-1zM12 389h1v1h-1zM17 389h2v1h-2zM20 389h2v1h-2zM24 389h5v1h-5zM30 389h1v1h-1zM33 389h1v1h-1zM36 389h9v1h-9zM46 389h4v1h-4zM51 389h3v1h-3zM56 389h2v1h-2zM63 389h1v1h-1zM4 390h1v1h-1zM12 390h2v1h-2zM20 390h2v1h-2zM24 390h4v1h-4zM29 390h2v1h-2zM34 390h10v1h-10zM46 390h2v1h-2zM50 390h4v1h-4zM56 390h1v1h-1zM69 390h1v1h-1zM11 391h1v1h-1zM14 391h2v1h-2zM18 391h2v1h-2zM24 391h10v1h-10zM36 391h4v1h-4zM41 391h3v1h-3zM46 391h2v1h-2zM60 391h1v1h-1zM65 391h2v1h-2zM78 391h1v1h-1zM3 392h1v1h-1zM14 392h2v1h-2zM17 392h3v1h-3zM24 392h2v1h-2zM27 392h7v1h-7zM36 392h2v1h-2zM40 392h5v1h-5zM46 392h2v1h-2zM61 392h1v1h-1zM67 392h1v1h-1zM1 393h1v1h-1zM6 393h2v1h-2zM18 393h2v1h-2zM26 393h2v1h-2zM32 393h14v1h-14zM48 393h2v1h-2zM51 393h5v1h-5zM69 393h1v1h-1zM18 394h2v1h-2zM26 394h2v1h-2zM31 394h15v1h-15zM48 394h1v1h-1zM50 394h5v1h-5zM62 394h1v1h-1zM7 395h1v1h-1zM14 395h2v1h-2zM19 395h2v1h-2zM22 395h1v1h-1zM29 395h4v1h-4zM35 395h6v1h-6zM42 395h2v1h-2zM46 395h4v1h-4zM52 395h2v1h-2zM59 395h1v1h-1zM64 395h3v1h-3zM81 395h1v1h-1zM7 396h1v1h-1zM15 396h1v1h-1zM19 396h1v1h-1zM21 396h1v1h-1zM25 396h1v1h-1zM30 396h3v1h-3zM35 396h6v1h-6zM42 396h2v1h-2zM46 396h4v1h-4zM53 396h1v1h-1zM58 396h2v1h-2zM64 396h2v1h-2zM12 397h2v1h-2zM22 397h1v1h-1zM24 397h2v1h-2zM28 397h8v1h-8zM39 397h2v1h-2zM43 397h1v1h-1zM48 397h4v1h-4zM53 397h1v1h-1zM61 397h1v1h-1zM13 398h1v1h-1zM15 398h1v1h-1zM23 398h1v1h-1zM25 398h1v1h-1zM28 398h8v1h-8zM41 398h3v1h-3zM48 398h1v1h-1zM50 398h4v1h-4zM61 398h1v1h-1zM79 398h1v1h-1zM6 399h1v1h-1zM12 399h4v1h-4zM24 399h1v1h-1zM26 399h1v1h-1zM28 399h8v1h-8zM37 399h3v1h-3zM41 399h1v1h-1zM44 399h4v1h-4zM50 399h3v1h-3zM56 399h1v1h-1zM58 399h2v1h-2zM68 399h2v1h-2zM77 399h1v1h-1zM6 400h2v1h-2zM15 400h1v1h-1zM26 400h4v1h-4zM32 400h4v1h-4zM38 400h1v1h-1zM40 400h2v1h-2zM46 400h2v1h-2zM50 400h2v1h-2zM53 400h1v1h-1zM56 400h4v1h-4zM77 400h1v1h-1zM100 400h2v1h-2zM4 401h1v1h-1zM22 401h1v1h-1zM26 401h2v1h-2zM31 401h7v1h-7zM46 401h2v1h-2zM58 401h1v1h-1zM74 401h1v1h-1zM4 402h1v1h-1zM7 402h1v1h-1zM22 402h1v1h-1zM25 402h1v1h-1zM31 402h7v1h-7zM40 402h1v1h-1zM43 402h1v1h-1zM45 402h3v1h-3zM56 402h2v1h-2zM59 402h1v1h-1zM66 402h1v1h-1zM13 403h1v1h-1zM24 403h2v1h-2zM30 403h2v1h-2zM40 403h1v1h-1zM43 403h1v1h-1zM50 403h1v1h-1zM55 403h3v1h-3zM62 403h1v1h-1zM65 403h2v1h-2zM72 403h1v1h-1zM79 403h1v1h-1zM12 404h1v1h-1zM21 404h1v1h-1zM31 404h1v1h-1zM42 404h1v1h-1zM44 404h1v1h-1zM50 404h1v1h-1zM57 404h1v1h-1zM67 404h1v1h-1zM72 404h2v1h-2zM89 404h1v1h-1zM32 405h1v1h-1zM36 405h1v1h-1zM48 405h2v1h-2zM52 405h2v1h-2zM55 405h1v1h-1zM58 405h2v1h-2zM62 405h2v1h-2zM67 405h1v1h-1zM90 405h1v1h-1zM98 405h1v1h-1zM2 406h1v1h-1zM8 406h2v1h-2zM18 406h2v1h-2zM36 406h1v1h-1zM48 406h2v1h-2zM52 406h1v1h-1zM54 406h1v1h-1zM58 406h1v1h-1zM62 406h1v1h-1zM67 406h1v1h-1zM79 406h1v1h-1zM89 406h1v1h-1zM18 407h1v1h-1zM24 407h3v1h-3zM29 407h1v1h-1zM35 407h1v1h-1zM38 407h1v1h-1zM42 407h2v1h-2zM50 407h1v1h-1zM58 407h1v1h-1zM67 407h1v1h-1zM72 407h1v1h-1zM89 407h1v1h-1zM95 407h1v1h-1zM24 408h2v1h-2zM28 408h1v1h-1zM33 408h1v1h-1zM38 408h1v1h-1zM51 408h2v1h-2zM58 408h1v1h-1zM66 408h1v1h-1zM92 408h1v1h-1zM4 409h1v1h-1zM13 409h1v1h-1zM20 409h2v1h-2zM23 409h1v1h-1zM28 409h2v1h-2zM32 409h2v1h-2zM40 409h1v1h-1zM42 409h2v1h-2zM53 409h1v1h-1zM55 409h1v1h-1zM69 409h1v1h-1zM80 409h2v1h-2zM4 410h1v1h-1zM6 410h2v1h-2zM10 410h1v1h-1zM22 410h1v1h-1zM28 410h1v1h-1zM32 410h1v1h-1zM36 410h1v1h-1zM38 410h1v1h-1zM40 410h1v1h-1zM42 410h1v1h-1zM52 410h1v1h-1zM81 410h1v1h-1zM88 410h1v1h-1zM5 411h1v1h-1zM9 411h1v1h-1zM15 411h2v1h-2zM20 411h1v1h-1zM24 411h2v1h-2zM28 411h2v1h-2zM34 411h4v1h-4zM46 411h2v1h-2zM55 411h2v1h-2zM64 411h2v1h-2zM106 411h1v1h-1zM8 412h5v1h-5zM14 412h1v1h-1zM24 412h1v1h-1zM46 412h2v1h-2zM55 412h1v1h-1zM64 412h2v1h-2zM4 413h2v1h-2zM10 413h1v1h-1zM21 413h1v1h-1zM31 413h1v1h-1zM35 413h1v1h-1zM46 413h3v1h-3zM70 413h1v1h-1zM106 413h1v1h-1zM3 414h3v1h-3zM7 414h1v1h-1zM10 414h2v1h-2zM24 414h2v1h-2zM30 414h1v1h-1zM46 414h1v1h-1zM49 414h1v1h-1zM55 414h3v1h-3zM70 414h1v1h-1zM96 414h1v1h-1zM3 415h6v1h-6zM10 415h6v1h-6zM30 415h1v1h-1zM35 415h1v1h-1zM39 415h1v1h-1zM45 415h1v1h-1zM57 415h1v1h-1zM99 415h1v1h-1zM4 416h4v1h-4zM9 416h4v1h-4zM30 416h2v1h-2zM35 416h1v1h-1zM39 416h1v1h-1zM46 416h2v1h-2zM54 416h2v1h-2zM57 416h1v1h-1zM69 416h1v1h-1zM8 417h4v1h-4zM20 417h1v1h-1zM38 417h2v1h-2zM42 417h1v1h-1zM46 417h1v1h-1zM48 417h4v1h-4zM62 417h2v1h-2zM76 417h1v1h-1zM78 417h1v1h-1zM8 418h3v1h-3zM19 418h1v1h-1zM21 418h1v1h-1zM30 418h1v1h-1zM34 418h1v1h-1zM37 418h2v1h-2zM46 418h1v1h-1zM48 418h3v1h-3zM62 418h1v1h-1zM65 418h1v1h-1zM76 418h2v1h-2zM6 419h1v1h-1zM9 419h2v1h-2zM12 419h2v1h-2zM40 419h2v1h-2zM48 419h3v1h-3zM52 419h3v1h-3zM56 419h1v1h-1zM61 419h3v1h-3zM80 419h1v1h-1zM7 420h1v1h-1zM10 420h1v1h-1zM12 420h1v1h-1zM18 420h1v1h-1zM27 420h1v1h-1zM41 420h1v1h-1zM44 420h2v1h-2zM48 420h2v1h-2zM51 420h3v1h-3zM63 420h1v1h-1zM4 421h1v1h-1zM25 421h1v1h-1zM32 421h1v1h-1zM38 421h1v1h-1zM41 421h3v1h-3zM47 421h1v1h-1zM55 421h1v1h-1zM58 421h2v1h-2zM65 421h1v1h-1zM72 421h1v1h-1zM26 422h1v1h-1zM29 422h1v1h-1zM33 422h1v1h-1zM38 422h1v1h-1zM40 422h3v1h-3zM46 422h2v1h-2zM51 422h2v1h-2zM58 422h1v1h-1zM66 422h1v1h-1zM0 423h1v1h-1zM26 423h2v1h-2zM34 423h2v1h-2zM38 423h1v1h-1zM44 423h1v1h-1zM76 423h2v1h-2zM80 423h1v1h-1zM92 423h1v1h-1zM27 424h1v1h-1zM35 424h1v1h-1zM42 424h1v1h-1zM44 424h1v1h-1zM48 424h1v1h-1zM61 424h1v1h-1zM77 424h1v1h-1zM92 424h1v1h-1zM6 425h1v1h-1zM13 425h1v1h-1zM28 425h2v1h-2zM31 425h1v1h-1zM34 425h2v1h-2zM42 425h1v1h-1zM48 425h4v1h-4zM66 425h1v1h-1zM81 425h1v1h-1zM16 426h1v1h-1zM29 426h3v1h-3zM35 426h3v1h-3zM42 426h1v1h-1zM48 426h1v1h-1zM56 426h2v1h-2zM66 426h1v1h-1zM92 426h1v1h-1zM31 427h2v1h-2zM40 427h2v1h-2zM45 427h1v1h-1zM56 427h3v1h-3zM62 427h2v1h-2zM68 427h1v1h-1zM74 427h1v1h-1zM31 428h1v1h-1zM33 428h1v1h-1zM35 428h1v1h-1zM38 428h4v1h-4zM44 428h1v1h-1zM56 428h2v1h-2zM59 428h1v1h-1zM68 428h1v1h-1zM74 428h1v1h-1zM86 428h1v1h-1zM16 429h1v1h-1zM34 429h1v1h-1zM36 429h4v1h-4zM48 429h2v1h-2zM72 429h1v1h-1zM88 429h1v1h-1zM26 430h1v1h-1zM34 430h1v1h-1zM37 430h4v1h-4zM49 430h1v1h-1zM59 430h1v1h-1zM72 430h1v1h-1zM15 431h1v1h-1zM33 431h6v1h-6zM44 431h2v1h-2zM56 431h1v1h-1zM64 431h1v1h-1zM82 431h1v1h-1zM14 432h1v1h-1zM32 432h8v1h-8zM44 432h1v1h-1zM56 432h1v1h-1zM24 433h1v1h-1zM31 433h1v1h-1zM35 433h3v1h-3zM40 433h4v1h-4zM49 433h1v1h-1zM58 433h1v1h-1zM66 433h1v1h-1zM77 433h1v1h-1zM83 433h1v1h-1zM28 434h2v1h-2zM34 434h4v1h-4zM40 434h6v1h-6zM75 434h1v1h-1zM80 434h1v1h-1zM88 434h1v1h-1zM30 435h2v1h-2zM33 435h1v1h-1zM35 435h3v1h-3zM40 435h5v1h-5zM46 435h1v1h-1zM48 435h1v1h-1zM54 435h1v1h-1zM30 436h1v1h-1zM32 436h5v1h-5zM40 436h2v1h-2zM43 436h2v1h-2zM48 436h2v1h-2zM54 436h1v1h-1zM36 437h2v1h-2zM40 437h4v1h-4zM61 437h1v1h-1zM63 437h1v1h-1zM13 438h1v1h-1zM40 438h1v1h-1zM62 438h1v1h-1zM103 438h1v1h-1zM8 439h2v1h-2zM32 439h1v1h-1zM82 439h1v1h-1zM33 440h1v1h-1zM36 441h1v1h-1zM99 441h1v1h-1zM36 442h1v1h-1zM0 443h1v1h-1zM16 443h1v1h-1zM28 443h2v1h-2zM33 445h1v1h-1zM39 445h1v1h-1zM54 445h1v1h-1zM27 446h1v1h-1zM32 446h1v1h-1zM38 446h1v1h-1zM42 446h2v1h-2zM32 447h2v1h-2zM38 447h1v1h-1zM32 448h2v1h-2zM58 448h2v1h-2zM47 449h1v1h-1zM52 449h1v1h-1zM54 449h1v1h-1zM19 450h1v1h-1zM34 450h2v1h-2zM47 450h1v1h-1zM54 450h2v1h-2zM62 450h1v1h-1zM7 451h1v1h-1zM31 451h1v1h-1zM46 451h1v1h-1zM51 451h1v1h-1zM54 451h1v1h-1zM57 451h1v1h-1zM59 451h3v1h-3zM66 451h2v1h-2zM72 451h2v1h-2zM6 452h2v1h-2zM26 452h2v1h-2zM47 452h1v1h-1zM50 452h2v1h-2zM53 452h5v1h-5zM66 452h2v1h-2zM69 452h1v1h-1zM71 452h3v1h-3zM78 452h1v1h-1zM12 453h1v1h-1zM22 453h2v1h-2zM25 453h1v1h-1zM29 453h1v1h-1zM34 453h2v1h-2zM37 453h1v1h-1zM44 453h2v1h-2zM48 453h8v1h-8zM58 453h1v1h-1zM61 453h5v1h-5zM68 453h2v1h-2zM71 453h1v1h-1zM76 453h2v1h-2zM80 453h1v1h-1zM21 454h3v1h-3zM25 454h1v1h-1zM34 454h1v1h-1zM37 454h2v1h-2zM44 454h2v1h-2zM48 454h4v1h-4zM54 454h2v1h-2zM62 454h1v1h-1zM65 454h1v1h-1zM76 454h2v1h-2zM80 454h2v1h-2zM16 455h1v1h-1zM21 455h1v1h-1zM29 455h1v1h-1zM43 455h1v1h-1zM45 455h5v1h-5zM51 455h2v1h-2zM65 455h1v1h-1zM71 455h1v1h-1zM74 455h1v1h-1zM76 455h2v1h-2zM80 455h1v1h-1zM18 456h2v1h-2zM21 456h1v1h-1zM26 456h2v1h-2zM32 456h1v1h-1zM44 456h1v1h-1zM46 456h2v1h-2zM52 456h1v1h-1zM54 456h1v1h-1zM58 456h1v1h-1zM64 456h1v1h-1zM77 456h1v1h-1zM80 456h2v1h-2zM15 457h1v1h-1zM24 457h2v1h-2zM29 457h1v1h-1zM36 457h3v1h-3zM40 457h1v1h-1zM42 457h2v1h-2zM45 457h2v1h-2zM65 457h1v1h-1zM77 457h1v1h-1zM80 457h2v1h-2zM13 458h1v1h-1zM15 458h1v1h-1zM20 458h1v1h-1zM25 458h1v1h-1zM28 458h2v1h-2zM36 458h7v1h-7zM44 458h3v1h-3zM65 458h1v1h-1zM68 458h1v1h-1zM76 458h1v1h-1zM80 458h2v1h-2zM83 458h1v1h-1zM16 459h6v1h-6zM24 459h2v1h-2zM30 459h2v1h-2zM34 459h1v1h-1zM40 459h1v1h-1zM43 459h3v1h-3zM48 459h1v1h-1zM66 459h1v1h-1zM82 459h2v1h-2zM11 460h1v1h-1zM18 460h1v1h-1zM20 460h2v1h-2zM30 460h1v1h-1zM34 460h2v1h-2zM38 460h2v1h-2zM45 460h1v1h-1zM47 460h1v1h-1zM49 460h2v1h-2zM53 460h2v1h-2zM68 460h1v1h-1zM83 460h2v1h-2zM21 461h1v1h-1zM29 461h7v1h-7zM38 461h1v1h-1zM40 461h4v1h-4zM49 461h1v1h-1zM54 461h1v1h-1zM82 461h1v1h-1zM87 461h1v1h-1zM7 462h1v1h-1zM20 462h1v1h-1zM22 462h1v1h-1zM31 462h2v1h-2zM36 462h2v1h-2zM39 462h1v1h-1zM48 462h1v1h-1zM83 462h1v1h-1zM85 462h1v1h-1zM87 462h1v1h-1zM27 463h1v1h-1zM40 463h2v1h-2zM44 463h2v1h-2zM49 463h1v1h-1zM60 463h3v1h-3zM84 463h1v1h-1zM16 464h2v1h-2zM24 464h1v1h-1zM40 464h1v1h-1zM42 464h2v1h-2zM45 464h1v1h-1zM48 464h1v1h-1zM59 464h1v1h-1zM62 464h1v1h-1zM84 464h1v1h-1zM17 465h1v1h-1zM28 465h4v1h-4zM34 465h2v1h-2zM37 465h1v1h-1zM41 465h2v1h-2zM46 465h2v1h-2zM50 465h1v1h-1zM56 465h2v1h-2zM83 465h1v1h-1zM85 465h2v1h-2zM17 466h1v1h-1zM26 466h2v1h-2zM31 466h1v1h-1zM34 466h4v1h-4zM44 466h3v1h-3zM61 466h1v1h-1zM83 466h1v1h-1zM86 466h1v1h-1zM19 467h3v1h-3zM24 467h1v1h-1zM36 467h2v1h-2zM40 467h1v1h-1zM43 467h2v1h-2zM46 467h2v1h-2zM49 467h1v1h-1zM54 467h1v1h-1zM86 467h2v1h-2zM25 468h1v1h-1zM36 468h2v1h-2zM40 468h1v1h-1zM43 468h1v1h-1zM45 468h3v1h-3zM57 468h1v1h-1zM82 468h1v1h-1zM86 468h1v1h-1zM6 469h1v1h-1zM10 469h1v1h-1zM26 469h2v1h-2zM32 469h1v1h-1zM36 469h2v1h-2zM46 469h1v1h-1zM49 469h1v1h-1zM54 469h2v1h-2zM60 469h2v1h-2zM84 469h4v1h-4zM10 470h1v1h-1zM26 470h1v1h-1zM32 470h2v1h-2zM36 470h2v1h-2zM46 470h2v1h-2zM54 470h1v1h-1zM60 470h2v1h-2zM84 470h4v1h-4zM19 471h1v1h-1zM26 471h1v1h-1zM30 471h1v1h-1zM32 471h1v1h-1zM37 471h1v1h-1zM43 471h1v1h-1zM46 471h2v1h-2zM49 471h1v1h-1zM86 471h3v1h-3zM18 472h1v1h-1zM26 472h2v1h-2zM33 472h1v1h-1zM36 472h2v1h-2zM39 472h1v1h-1zM43 472h2v1h-2zM47 472h3v1h-3zM52 472h1v1h-1zM86 472h2v1h-2zM89 472h1v1h-1zM22 473h1v1h-1zM25 473h1v1h-1zM28 473h2v1h-2zM38 473h2v1h-2zM42 473h3v1h-3zM46 473h1v1h-1zM61 473h1v1h-1zM85 473h1v1h-1zM10 474h2v1h-2zM22 474h1v1h-1zM24 474h2v1h-2zM29 474h1v1h-1zM38 474h3v1h-3zM42 474h6v1h-6zM62 474h2v1h-2zM65 474h1v1h-1zM70 474h1v1h-1zM86 474h1v1h-1zM97 474h3v1h-3zM2 475h2v1h-2zM25 475h1v1h-1zM29 475h1v1h-1zM31 475h1v1h-1zM36 475h3v1h-3zM44 475h6v1h-6zM51 475h1v1h-1zM54 475h2v1h-2zM61 475h1v1h-1zM83 475h1v1h-1zM87 475h1v1h-1zM96 475h2v1h-2zM106 475h1v1h-1zM28 476h1v1h-1zM30 476h2v1h-2zM36 476h3v1h-3zM40 476h11v1h-11zM55 476h1v1h-1zM83 476h1v1h-1zM86 476h2v1h-2zM94 476h1v1h-1zM96 476h1v1h-1zM100 476h1v1h-1zM102 476h1v1h-1zM105 476h1v1h-1zM15 477h1v1h-1zM18 477h1v1h-1zM20 477h1v1h-1zM26 477h1v1h-1zM33 477h1v1h-1zM40 477h2v1h-2zM44 477h4v1h-4zM52 477h1v1h-1zM56 477h1v1h-1zM63 477h3v1h-3zM68 477h1v1h-1zM83 477h4v1h-4zM89 477h1v1h-1zM92 477h4v1h-4zM98 477h2v1h-2zM101 477h4v1h-4zM108 477h2v1h-2zM21 478h1v1h-1zM25 478h1v1h-1zM27 478h1v1h-1zM31 478h3v1h-3zM40 478h2v1h-2zM43 478h5v1h-5zM52 478h2v1h-2zM57 478h1v1h-1zM60 478h1v1h-1zM62 478h3v1h-3zM68 478h1v1h-1zM84 478h12v1h-12zM98 478h7v1h-7zM106 478h1v1h-1zM108 478h2v1h-2zM112 478h1v1h-1zM17 479h1v1h-1zM22 479h1v1h-1zM25 479h1v1h-1zM30 479h1v1h-1zM36 479h1v1h-1zM40 479h6v1h-6zM49 479h1v1h-1zM72 479h1v1h-1zM82 479h2v1h-2zM85 479h3v1h-3zM89 479h1v1h-1zM93 479h1v1h-1zM96 479h4v1h-4zM101 479h4v1h-4zM106 479h1v1h-1zM109 479h2v1h-2zM30 480h2v1h-2zM36 480h1v1h-1zM40 480h6v1h-6zM48 480h2v1h-2zM72 480h1v1h-1zM81 480h3v1h-3zM86 480h1v1h-1zM89 480h1v1h-1zM97 480h2v1h-2zM106 480h1v1h-1zM25 481h1v1h-1zM27 481h1v1h-1zM32 481h2v1h-2zM35 481h1v1h-1zM38 481h2v1h-2zM46 481h2v1h-2zM53 481h1v1h-1zM56 481h1v1h-1zM72 481h1v1h-1zM76 481h1v1h-1zM80 481h2v1h-2zM83 481h3v1h-3zM92 481h2v1h-2zM105 481h3v1h-3zM109 481h2v1h-2zM112 481h6v1h-6zM32 482h2v1h-2zM38 482h2v1h-2zM46 482h2v1h-2zM53 482h1v1h-1zM56 482h2v1h-2zM66 482h1v1h-1zM69 482h1v1h-1zM73 482h1v1h-1zM75 482h2v1h-2zM80 482h6v1h-6zM105 482h1v1h-1zM107 482h1v1h-1zM112 482h5v1h-5zM20 483h1v1h-1zM34 483h2v1h-2zM38 483h2v1h-2zM41 483h1v1h-1zM45 483h3v1h-3zM49 483h1v1h-1zM51 483h3v1h-3zM55 483h1v1h-1zM66 483h4v1h-4zM72 483h1v1h-1zM75 483h1v1h-1zM80 483h3v1h-3zM108 483h2v1h-2zM112 483h2v1h-2zM115 483h2v1h-2zM19 484h1v1h-1zM21 484h1v1h-1zM34 484h6v1h-6zM42 484h1v1h-1zM44 484h4v1h-4zM49 484h5v1h-5zM55 484h1v1h-1zM58 484h1v1h-1zM66 484h4v1h-4zM71 484h5v1h-5zM79 484h4v1h-4zM86 484h1v1h-1zM108 484h2v1h-2zM112 484h6v1h-6zM120 484h1v1h-1zM12 485h1v1h-1zM28 485h1v1h-1zM34 485h7v1h-7zM44 485h3v1h-3zM48 485h4v1h-4zM54 485h2v1h-2zM57 485h1v1h-1zM60 485h1v1h-1zM66 485h2v1h-2zM70 485h3v1h-3zM74 485h4v1h-4zM82 485h1v1h-1zM13 486h2v1h-2zM31 486h5v1h-5zM37 486h4v1h-4zM44 486h2v1h-2zM47 486h2v1h-2zM50 486h2v1h-2zM55 486h1v1h-1zM57 486h1v1h-1zM62 486h2v1h-2zM66 486h3v1h-3zM70 486h3v1h-3zM74 486h2v1h-2zM116 486h1v1h-1zM29 487h1v1h-1zM31 487h1v1h-1zM37 487h2v1h-2zM41 487h1v1h-1zM46 487h2v1h-2zM49 487h3v1h-3zM54 487h2v1h-2zM60 487h1v1h-1zM64 487h1v1h-1zM68 487h2v1h-2zM72 487h1v1h-1zM117 487h1v1h-1zM120 487h1v1h-1zM17 488h1v1h-1zM28 488h2v1h-2zM37 488h2v1h-2zM40 488h2v1h-2zM46 488h3v1h-3zM50 488h2v1h-2zM54 488h2v1h-2zM68 488h1v1h-1zM116 488h2v1h-2zM120 488h2v1h-2zM30 489h1v1h-1zM36 489h4v1h-4zM43 489h2v1h-2zM50 489h2v1h-2zM54 489h2v1h-2zM60 489h1v1h-1zM64 489h1v1h-1zM67 489h1v1h-1zM119 489h2v1h-2zM25 490h1v1h-1zM37 490h3v1h-3zM42 490h2v1h-2zM45 490h1v1h-1zM47 490h1v1h-1zM50 490h2v1h-2zM55 490h1v1h-1zM60 490h1v1h-1zM66 490h1v1h-1zM76 490h2v1h-2zM86 490h1v1h-1zM119 490h2v1h-2zM122 490h1v1h-1zM21 491h1v1h-1zM23 491h1v1h-1zM28 491h1v1h-1zM30 491h4v1h-4zM36 491h4v1h-4zM46 491h5v1h-5zM56 491h3v1h-3zM118 491h2v1h-2zM121 491h2v1h-2zM20 492h3v1h-3zM28 492h2v1h-2zM32 492h2v1h-2zM36 492h4v1h-4zM46 492h5v1h-5zM56 492h2v1h-2zM59 492h1v1h-1zM118 492h1v1h-1zM120 492h3v1h-3zM19 493h1v1h-1zM24 493h2v1h-2zM28 493h1v1h-1zM30 493h2v1h-2zM36 493h2v1h-2zM39 493h2v1h-2zM43 493h1v1h-1zM47 493h4v1h-4zM56 493h1v1h-1zM60 493h5v1h-5zM75 493h1v1h-1zM118 493h2v1h-2zM18 494h1v1h-1zM24 494h2v1h-2zM28 494h4v1h-4zM36 494h2v1h-2zM42 494h2v1h-2zM47 494h4v1h-4zM54 494h1v1h-1zM60 494h1v1h-1zM62 494h3v1h-3zM75 494h1v1h-1zM119 494h1v1h-1zM121 494h1v1h-1zM30 495h3v1h-3zM38 495h3v1h-3zM42 495h3v1h-3zM48 495h2v1h-2zM52 495h2v1h-2zM58 495h2v1h-2zM64 495h1v1h-1zM71 495h1v1h-1zM118 495h2v1h-2zM122 495h1v1h-1zM30 496h4v1h-4zM38 496h2v1h-2zM41 496h4v1h-4zM48 496h3v1h-3zM53 496h1v1h-1zM59 496h1v1h-1zM118 496h2v1h-2zM121 496h2v1h-2zM15 497h1v1h-1zM36 497h2v1h-2zM40 497h4v1h-4zM46 497h5v1h-5zM52 497h2v1h-2zM55 497h1v1h-1zM57 497h3v1h-3zM71 497h1v1h-1zM122 497h1v1h-1zM12 498h1v1h-1zM36 498h2v1h-2zM40 498h4v1h-4zM46 498h2v1h-2zM49 498h1v1h-1zM51 498h5v1h-5zM57 498h2v1h-2zM64 498h2v1h-2zM71 498h1v1h-1zM77 498h1v1h-1zM122 498h1v1h-1zM5 499h1v1h-1zM28 499h2v1h-2zM32 499h8v1h-8zM46 499h2v1h-2zM51 499h4v1h-4zM56 499h4v1h-4zM69 499h1v1h-1zM122 499h1v1h-1zM16 500h2v1h-2zM22 500h1v1h-1zM25 500h1v1h-1zM28 500h2v1h-2zM32 500h8v1h-8zM46 500h2v1h-2zM50 500h4v1h-4zM56 500h4v1h-4zM62 500h1v1h-1zM122 500h1v1h-1zM15 501h1v1h-1zM19 501h1v1h-1zM23 501h3v1h-3zM28 501h1v1h-1zM32 501h2v1h-2zM36 501h2v1h-2zM41 501h9v1h-9zM53 501h1v1h-1zM60 501h2v1h-2zM63 501h1v1h-1zM19 502h1v1h-1zM22 502h4v1h-4zM32 502h2v1h-2zM36 502h2v1h-2zM39 502h1v1h-1zM42 502h8v1h-8zM52 502h1v1h-1zM60 502h2v1h-2zM63 502h1v1h-1zM18 503h1v1h-1zM26 503h2v1h-2zM30 503h2v1h-2zM33 503h1v1h-1zM38 503h1v1h-1zM44 503h4v1h-4zM52 503h2v1h-2zM59 503h1v1h-1zM61 503h1v1h-1zM121 503h2v1h-2zM18 504h1v1h-1zM27 504h1v1h-1zM30 504h1v1h-1zM38 504h3v1h-3zM42 504h1v1h-1zM44 504h4v1h-4zM52 504h2v1h-2zM58 504h4v1h-4zM122 504h1v1h-1zM28 505h1v1h-1zM32 505h6v1h-6zM39 505h3v1h-3zM46 505h2v1h-2zM54 505h1v1h-1zM58 505h2v1h-2zM61 505h3v1h-3zM122 505h1v1h-1zM32 506h10v1h-10zM46 506h2v1h-2zM54 506h1v1h-1zM58 506h2v1h-2zM120 506h1v1h-1zM122 506h1v1h-1zM20 507h2v1h-2zM24 507h1v1h-1zM26 507h1v1h-1zM28 507h4v1h-4zM36 507h2v1h-2zM40 507h4v1h-4zM49 507h1v1h-1zM51 507h1v1h-1zM53 507h1v1h-1zM57 507h1v1h-1zM61 507h1v1h-1zM10 508h1v1h-1zM25 508h1v1h-1zM27 508h5v1h-5zM36 508h2v1h-2zM40 508h4v1h-4zM49 508h1v1h-1zM51 508h3v1h-3zM57 508h1v1h-1zM59 508h2v1h-2zM68 508h2v1h-2zM21 509h1v1h-1zM24 509h2v1h-2zM28 509h3v1h-3zM34 509h2v1h-2zM38 509h4v1h-4zM44 509h2v1h-2zM59 509h2v1h-2zM62 509h3v1h-3zM66 509h2v1h-2zM71 509h1v1h-1zM118 509h1v1h-1zM120 509h3v1h-3zM17 510h1v1h-1zM21 510h1v1h-1zM24 510h2v1h-2zM28 510h2v1h-2zM31 510h1v1h-1zM34 510h2v1h-2zM38 510h4v1h-4zM44 510h4v1h-4zM54 510h3v1h-3zM59 510h3v1h-3zM64 510h2v1h-2zM67 510h1v1h-1zM70 510h1v1h-1zM121 510h2v1h-2zM6 511h1v1h-1zM10 511h2v1h-2zM23 511h1v1h-1zM26 511h2v1h-2zM32 511h2v1h-2zM35 511h1v1h-1zM40 511h2v1h-2zM46 511h8v1h-8zM58 511h2v1h-2zM62 511h1v1h-1zM122 511h1v1h-1zM1 512h1v1h-1zM6 512h2v1h-2zM10 512h1v1h-1zM22 512h1v1h-1zM24 512h3v1h-3zM32 512h1v1h-1zM34 512h1v1h-1zM38 512h1v1h-1zM40 512h2v1h-2zM45 512h4v1h-4zM50 512h2v1h-2zM58 512h1v1h-1zM60 512h1v1h-1zM63 512h2v1h-2zM66 512h2v1h-2zM120 512h1v1h-1zM122 512h1v1h-1zM26 513h8v1h-8zM38 513h5v1h-5zM44 513h5v1h-5zM50 513h2v1h-2zM53 513h3v1h-3zM62 513h1v1h-1zM122 513h1v1h-1zM8 514h1v1h-1zM19 514h1v1h-1zM28 514h5v1h-5zM36 514h1v1h-1zM38 514h5v1h-5zM44 514h1v1h-1zM46 514h2v1h-2zM49 514h7v1h-7zM122 514h1v1h-1zM7 515h1v1h-1zM17 515h1v1h-1zM20 515h2v1h-2zM24 515h6v1h-6zM32 515h10v1h-10zM47 515h1v1h-1zM50 515h1v1h-1zM52 515h2v1h-2zM64 515h1v1h-1zM121 515h1v1h-1zM6 516h1v1h-1zM17 516h4v1h-4zM24 516h1v1h-1zM26 516h4v1h-4zM32 516h4v1h-4zM38 516h4v1h-4zM45 516h1v1h-1zM50 516h1v1h-1zM53 516h1v1h-1zM60 516h1v1h-1zM65 516h2v1h-2zM8 517h2v1h-2zM11 517h1v1h-1zM14 517h2v1h-2zM18 517h1v1h-1zM26 517h2v1h-2zM30 517h2v1h-2zM34 517h5v1h-5zM42 517h1v1h-1zM44 517h2v1h-2zM52 517h10v1h-10zM71 517h1v1h-1zM78 517h2v1h-2zM118 517h4v1h-4zM8 518h1v1h-1zM11 518h1v1h-1zM18 518h2v1h-2zM26 518h2v1h-2zM30 518h1v1h-1zM34 518h4v1h-4zM40 518h1v1h-1zM44 518h3v1h-3zM52 518h3v1h-3zM56 518h6v1h-6zM78 518h2v1h-2zM86 518h2v1h-2zM93 518h1v1h-1zM118 518h4v1h-4zM1 519h1v1h-1zM8 519h2v1h-2zM11 519h3v1h-3zM20 519h4v1h-4zM26 519h1v1h-1zM28 519h6v1h-6zM36 519h5v1h-5zM42 519h4v1h-4zM48 519h4v1h-4zM54 519h8v1h-8zM84 519h1v1h-1zM86 519h2v1h-2zM113 519h1v1h-1zM117 519h1v1h-1zM8 520h2v1h-2zM13 520h1v1h-1zM20 520h2v1h-2zM23 520h1v1h-1zM26 520h2v1h-2zM31 520h4v1h-4zM36 520h5v1h-5zM42 520h2v1h-2zM48 520h4v1h-4zM54 520h3v1h-3zM58 520h1v1h-1zM60 520h2v1h-2zM63 520h1v1h-1zM81 520h1v1h-1zM84 520h1v1h-1zM86 520h2v1h-2zM112 520h2v1h-2zM115 520h1v1h-1zM117 520h2v1h-2zM2 521h1v1h-1zM16 521h5v1h-5zM22 521h4v1h-4zM28 521h6v1h-6zM37 521h3v1h-3zM41 521h1v1h-1zM43 521h1v1h-1zM46 521h2v1h-2zM51 521h3v1h-3zM56 521h3v1h-3zM60 521h2v1h-2zM66 521h1v1h-1zM84 521h4v1h-4zM89 521h2v1h-2zM95 521h1v1h-1zM110 521h2v1h-2zM113 521h1v1h-1zM117 521h1v1h-1zM2 522h2v1h-2zM5 522h1v1h-1zM7 522h1v1h-1zM16 522h2v1h-2zM19 522h1v1h-1zM22 522h4v1h-4zM27 522h1v1h-1zM30 522h4v1h-4zM35 522h2v1h-2zM38 522h2v1h-2zM41 522h3v1h-3zM46 522h2v1h-2zM51 522h3v1h-3zM56 522h4v1h-4zM67 522h1v1h-1zM84 522h4v1h-4zM89 522h3v1h-3zM94 522h3v1h-3zM98 522h1v1h-1zM106 522h2v1h-2zM111 522h2v1h-2zM115 522h1v1h-1zM8 523h2v1h-2zM12 523h2v1h-2zM15 523h1v1h-1zM20 523h2v1h-2zM24 523h2v1h-2zM27 523h1v1h-1zM31 523h3v1h-3zM36 523h2v1h-2zM42 523h4v1h-4zM47 523h2v1h-2zM50 523h4v1h-4zM56 523h2v1h-2zM81 523h1v1h-1zM88 523h6v1h-6zM96 523h2v1h-2zM110 523h7v1h-7zM8 524h2v1h-2zM12 524h2v1h-2zM20 524h2v1h-2zM23 524h3v1h-3zM32 524h6v1h-6zM39 524h1v1h-1zM42 524h2v1h-2zM45 524h9v1h-9zM56 524h2v1h-2zM63 524h1v1h-1zM88 524h15v1h-15zM106 524h11v1h-11zM0 525h2v1h-2zM8 525h1v1h-1zM10 525h2v1h-2zM15 525h1v1h-1zM24 525h4v1h-4zM30 525h10v1h-10zM41 525h1v1h-1zM43 525h1v1h-1zM48 525h1v1h-1zM52 525h1v1h-1zM54 525h2v1h-2zM57 525h1v1h-1zM86 525h1v1h-1zM93 525h7v1h-7zM102 525h6v1h-6zM110 525h2v1h-2zM0 526h2v1h-2zM8 526h2v1h-2zM24 526h3v1h-3zM30 526h10v1h-10zM48 526h1v1h-1zM52 526h1v1h-1zM94 526h7v1h-7zM102 526h6v1h-6zM12 527h2v1h-2zM15 527h4v1h-4zM21 527h1v1h-1zM24 527h3v1h-3zM30 527h3v1h-3zM34 527h2v1h-2zM38 527h2v1h-2zM47 527h5v1h-5zM97 527h5v1h-5zM8 528h1v1h-1zM12 528h3v1h-3zM17 528h1v1h-1zM19 528h1v1h-1zM24 528h2v1h-2zM27 528h1v1h-1zM30 528h2v1h-2zM33 528h3v1h-3zM37 528h1v1h-1zM39 528h1v1h-1zM46 528h1v1h-1zM48 528h3v1h-3zM98 528h1v1h-1zM100 528h2v1h-2zM3 529h2v1h-2zM8 529h2v1h-2zM11 529h2v1h-2zM17 529h1v1h-1zM22 529h2v1h-2zM28 529h1v1h-1zM31 529h1v1h-1zM33 529h11v1h-11zM46 529h2v1h-2zM52 529h1v1h-1zM56 529h1v1h-1zM66 529h1v1h-1zM70 529h2v1h-2zM101 529h1v1h-1zM108 529h1v1h-1zM2 530h4v1h-4zM8 530h2v1h-2zM12 530h2v1h-2zM17 530h1v1h-1zM20 530h4v1h-4zM29 530h1v1h-1zM31 530h1v1h-1zM33 530h2v1h-2zM37 530h2v1h-2zM40 530h4v1h-4zM46 530h2v1h-2zM57 530h1v1h-1zM5 531h1v1h-1zM8 531h6v1h-6zM25 531h1v1h-1zM30 531h3v1h-3zM35 531h4v1h-4zM40 531h2v1h-2zM45 531h1v1h-1zM50 531h1v1h-1zM53 531h1v1h-1zM63 531h1v1h-1zM65 531h1v1h-1zM74 531h2v1h-2zM8 532h6v1h-6zM18 532h2v1h-2zM24 532h2v1h-2zM30 532h2v1h-2zM35 532h3v1h-3zM39 532h3v1h-3zM43 532h1v1h-1zM45 532h1v1h-1zM51 532h1v1h-1zM63 532h1v1h-1zM65 532h1v1h-1zM70 532h1v1h-1zM75 532h1v1h-1zM0 533h2v1h-2zM6 533h3v1h-3zM14 533h2v1h-2zM28 533h2v1h-2zM31 533h5v1h-5zM39 533h1v1h-1zM44 533h2v1h-2zM48 533h2v1h-2zM53 533h1v1h-1zM62 533h1v1h-1zM1 534h2v1h-2zM6 534h2v1h-2zM14 534h4v1h-4zM27 534h3v1h-3zM32 534h4v1h-4zM38 534h3v1h-3zM45 534h1v1h-1zM49 534h1v1h-1zM52 534h1v1h-1zM5 535h8v1h-8zM16 535h1v1h-1zM22 535h4v1h-4zM28 535h4v1h-4zM34 535h6v1h-6zM42 535h2v1h-2zM46 535h2v1h-2zM49 535h1v1h-1zM7 536h4v1h-4zM12 536h2v1h-2zM16 536h1v1h-1zM22 536h1v1h-1zM24 536h2v1h-2zM28 536h2v1h-2zM31 536h1v1h-1zM34 536h6v1h-6zM42 536h2v1h-2zM1 537h1v1h-1zM5 537h1v1h-1zM8 537h2v1h-2zM11 537h1v1h-1zM13 537h1v1h-1zM20 537h1v1h-1zM26 537h5v1h-5zM35 537h3v1h-3zM40 537h2v1h-2zM44 537h1v1h-1zM46 537h2v1h-2zM54 537h1v1h-1zM60 537h2v1h-2zM0 538h1v1h-1zM5 538h1v1h-1zM7 538h3v1h-3zM14 538h2v1h-2zM17 538h1v1h-1zM19 538h2v1h-2zM26 538h4v1h-4zM31 538h1v1h-1zM35 538h4v1h-4zM40 538h3v1h-3zM46 538h2v1h-2zM50 538h1v1h-1zM54 538h1v1h-1zM60 538h1v1h-1zM0 539h2v1h-2zM3 539h3v1h-3zM7 539h3v1h-3zM14 539h1v1h-1zM16 539h2v1h-2zM20 539h2v1h-2zM23 539h1v1h-1zM25 539h5v1h-5zM36 539h2v1h-2zM39 539h4v1h-4zM48 539h4v1h-4zM53 539h1v1h-1zM61 539h2v1h-2zM1 540h1v1h-1zM8 540h1v1h-1zM11 540h1v1h-1zM14 540h4v1h-4zM19 540h3v1h-3zM23 540h7v1h-7zM32 540h2v1h-2zM36 540h2v1h-2zM39 540h1v1h-1zM42 540h2v1h-2zM48 540h5v1h-5zM60 540h1v1h-1zM62 540h1v1h-1zM5 541h1v1h-1zM7 541h6v1h-6zM22 541h1v1h-1zM30 541h3v1h-3zM34 541h4v1h-4zM39 541h6v1h-6zM46 541h2v1h-2zM49 541h1v1h-1zM52 541h1v1h-1zM56 541h1v1h-1zM58 541h1v1h-1zM64 541h2v1h-2zM4 542h1v1h-1zM7 542h7v1h-7zM16 542h1v1h-1zM19 542h1v1h-1zM24 542h2v1h-2zM27 542h2v1h-2zM30 542h3v1h-3zM34 542h3v1h-3zM40 542h6v1h-6zM47 542h1v1h-1zM49 542h1v1h-1zM56 542h1v1h-1zM8 543h8v1h-8zM18 543h2v1h-2zM21 543h2v1h-2zM27 543h1v1h-1zM30 543h2v1h-2zM33 543h5v1h-5zM40 543h6v1h-6zM55 543h1v1h-1zM70 543h1v1h-1zM8 544h2v1h-2zM12 544h2v1h-2zM15 544h5v1h-5zM22 544h2v1h-2zM28 544h9v1h-9zM38 544h5v1h-5zM44 544h4v1h-4zM9 545h9v1h-9zM22 545h1v1h-1zM24 545h2v1h-2zM28 545h1v1h-1zM30 545h4v1h-4zM36 545h2v1h-2zM39 545h2v1h-2zM42 545h4v1h-4zM48 545h1v1h-1zM9 546h9v1h-9zM24 546h2v1h-2zM30 546h5v1h-5zM36 546h5v1h-5zM43 546h3v1h-3zM47 546h3v1h-3zM54 546h1v1h-1zM8 547h2v1h-2zM11 547h5v1h-5zM20 547h2v1h-2zM24 547h6v1h-6zM34 547h3v1h-3zM38 547h2v1h-2zM42 547h3v1h-3zM8 548h2v1h-2zM12 548h1v1h-1zM14 548h2v1h-2zM20 548h1v1h-1zM24 548h5v1h-5zM35 548h4v1h-4zM41 548h5v1h-5zM48 548h1v1h-1zM50 548h1v1h-1zM8 549h7v1h-7zM26 549h4v1h-4zM34 549h12v1h-12zM60 549h1v1h-1zM8 550h8v1h-8zM18 550h1v1h-1zM26 550h4v1h-4zM33 550h5v1h-5zM39 550h3v1h-3zM44 550h3v1h-3zM62 550h1v1h-1zM10 551h5v1h-5zM18 551h3v1h-3zM25 551h1v1h-1zM27 551h1v1h-1zM30 551h2v1h-2zM33 551h3v1h-3zM43 551h6v1h-6zM50 551h1v1h-1zM55 551h1v1h-1zM59 551h1v1h-1zM11 552h1v1h-1zM13 552h3v1h-3zM18 552h1v1h-1zM21 552h1v1h-1zM24 552h1v1h-1zM26 552h1v1h-1zM30 552h2v1h-2zM35 552h1v1h-1zM37 552h1v1h-1zM41 552h1v1h-1zM44 552h5v1h-5zM51 552h1v1h-1zM55 552h1v1h-1zM7 553h1v1h-1zM11 553h3v1h-3zM24 553h1v1h-1zM27 553h1v1h-1zM34 553h12v1h-12zM48 553h3v1h-3zM56 553h1v1h-1zM25 554h1v1h-1zM27 554h1v1h-1zM38 554h14v1h-14zM57 554h1v1h-1zM60 554h1v1h-1zM6 555h9v1h-9zM27 555h1v1h-1zM29 555h1v1h-1zM41 555h1v1h-1zM43 555h5v1h-5zM49 555h1v1h-1zM54 555h1v1h-1zM8 556h8v1h-8zM19 556h1v1h-1zM27 556h3v1h-3zM43 556h1v1h-1zM45 556h4v1h-4zM6 557h2v1h-2zM10 557h3v1h-3zM14 557h1v1h-1zM21 557h1v1h-1zM43 557h1v1h-1zM45 557h2v1h-2zM48 557h1v1h-1zM51 557h1v1h-1zM59 557h1v1h-1zM6 558h6v1h-6zM46 558h1v1h-1zM48 558h1v1h-1zM7 559h4v1h-4zM12 559h2v1h-2zM30 559h2v1h-2zM46 559h5v1h-5zM8 560h2v1h-2zM12 560h1v1h-1zM43 560h1v1h-1zM46 560h4v1h-4zM5 561h6v1h-6zM44 561h2v1h-2zM48 561h2v1h-2zM5 562h6v1h-6zM44 562h6v1h-6zM52 562h1v1h-1zM4 563h8v1h-8zM46 563h4v1h-4zM4 564h2v1h-2zM7 564h1v1h-1zM45 564h5v1h-5zM4 565h5v1h-5zM45 565h3v1h-3zM4 566h5v1h-5zM45 566h3v1h-3zM3 567h6v1h-6zM46 567h2v1h-2zM50 567h2v1h-2zM3 568h7v1h-7zM47 568h5v1h-5zM4 569h5v1h-5zM10 569h2v1h-2zM46 569h4v1h-4zM3 570h7v1h-7zM46 570h3v1h-3zM50 570h1v1h-1zM3 571h4v1h-4zM42 571h1v1h-1zM48 571h4v1h-4zM0 572h1v1h-1zM3 572h4v1h-4zM10 572h1v1h-1zM43 572h1v1h-1zM48 572h4v1h-4zM1 573h1v1h-1zM4 573h3v1h-3zM8 573h1v1h-1zM48 573h4v1h-4zM4 574h3v1h-3zM48 574h3v1h-3zM4 575h1v1h-1zM6 575h2v1h-2zM46 575h2v1h-2zM50 575h2v1h-2zM3 576h4v1h-4zM47 576h5v1h-5zM2 577h4v1h-4zM46 577h4v1h-4zM51 577h2v1h-2zM54 577h1v1h-1zM3 578h3v1h-3zM46 578h1v1h-1zM49 578h7v1h-7zM57 578h1v1h-1zM1 579h1v1h-1zM4 579h2v1h-2zM7 579h1v1h-1zM50 579h5v1h-5zM93 579h1v1h-1zM0 580h2v1h-2zM3 580h4v1h-4zM49 580h6v1h-6zM93 580h1v1h-1zM0 581h2v1h-2zM3 581h1v1h-1zM5 581h3v1h-3zM47 581h1v1h-1zM50 581h5v1h-5zM56 581h2v1h-2zM61 581h1v1h-1zM81 581h1v1h-1zM85 581h1v1h-1zM90 581h2v1h-2zM2 582h2v1h-2zM5 582h3v1h-3zM50 582h2v1h-2zM56 582h4v1h-4zM80 582h2v1h-2zM84 582h2v1h-2zM91 582h1v1h-1zM96 582h2v1h-2zM2 583h4v1h-4zM50 583h2v1h-2zM53 583h1v1h-1zM55 583h7v1h-7zM65 583h1v1h-1zM67 583h1v1h-1zM72 583h3v1h-3zM84 583h2v1h-2zM87 583h1v1h-1zM90 583h1v1h-1zM92 583h2v1h-2zM2 584h4v1h-4zM50 584h2v1h-2zM56 584h8v1h-8zM66 584h2v1h-2zM71 584h3v1h-3zM75 584h3v1h-3zM80 584h10v1h-10zM91 584h5v1h-5zM2 585h5v1h-5zM8 585h1v1h-1zM56 585h12v1h-12zM70 585h16v1h-16zM88 585h8v1h-8zM97 585h1v1h-1zM100 585h2v1h-2zM2 586h6v1h-6zM56 586h22v1h-22zM79 586h8v1h-8zM88 586h6v1h-6zM99 586h3v1h-3zM1 587h7v1h-7zM56 587h2v1h-2zM63 587h2v1h-2zM66 587h2v1h-2zM70 587h5v1h-5zM76 587h10v1h-10zM93 587h5v1h-5zM100 587h2v1h-2zM2 588h6v1h-6zM56 588h2v1h-2zM65 588h1v1h-1zM70 588h1v1h-1zM72 588h2v1h-2zM76 588h2v1h-2zM80 588h3v1h-3zM94 588h1v1h-1zM97 588h1v1h-1zM100 588h2v1h-2zM0 589h1v1h-1zM2 589h4v1h-4zM60 589h2v1h-2zM63 589h1v1h-1zM65 589h1v1h-1zM73 589h4v1h-4zM80 589h2v1h-2zM86 589h2v1h-2zM93 589h1v1h-1zM95 589h1v1h-1zM99 589h4v1h-4zM4 590h3v1h-3zM8 590h2v1h-2zM61 590h1v1h-1zM72 590h2v1h-2zM76 590h1v1h-1zM81 590h1v1h-1zM95 590h1v1h-1zM99 590h3v1h-3zM3 591h3v1h-3zM60 591h1v1h-1zM100 591h4v1h-4zM5 592h1v1h-1zM7 592h1v1h-1zM99 592h3v1h-3zM104 592h1v1h-1zM6 593h3v1h-3zM12 593h1v1h-1zM96 593h1v1h-1zM100 593h1v1h-1zM102 593h1v1h-1zM3 594h1v1h-1zM5 594h2v1h-2zM8 594h1v1h-1zM97 594h1v1h-1zM3 595h1v1h-1zM6 595h3v1h-3zM97 595h3v1h-3zM102 595h2v1h-2zM105 595h1v1h-1zM6 596h2v1h-2zM94 596h1v1h-1zM97 596h4v1h-4zM102 596h3v1h-3zM5 597h1v1h-1zM8 597h2v1h-2zM12 597h1v1h-1zM98 597h2v1h-2zM8 598h2v1h-2zM12 598h2v1h-2zM96 598h1v1h-1zM98 598h4v1h-4zM2 599h1v1h-1zM7 599h6v1h-6zM18 599h2v1h-2zM99 599h4v1h-4zM9 600h1v1h-1zM11 600h3v1h-3zM94 600h2v1h-2zM97 600h2v1h-2zM100 600h1v1h-1zM6 601h3v1h-3zM10 601h2v1h-2zM14 601h1v1h-1zM87 601h1v1h-1zM93 601h1v1h-1zM95 601h6v1h-6zM104 601h1v1h-1zM6 602h2v1h-2zM9 602h3v1h-3zM13 602h2v1h-2zM87 602h1v1h-1zM90 602h9v1h-9zM8 603h2v1h-2zM11 603h4v1h-4zM90 603h3v1h-3zM94 603h6v1h-6zM9 604h1v1h-1zM11 604h4v1h-4zM16 604h1v1h-1zM78 604h1v1h-1zM86 604h2v1h-2zM89 604h9v1h-9zM10 605h2v1h-2zM13 605h2v1h-2zM79 605h1v1h-1zM81 605h1v1h-1zM85 605h1v1h-1zM89 605h7v1h-7zM11 606h1v1h-1zM16 606h1v1h-1zM22 606h1v1h-1zM78 606h2v1h-2zM84 606h2v1h-2zM87 606h9v1h-9zM12 607h2v1h-2zM16 607h2v1h-2zM19 607h1v1h-1zM22 607h2v1h-2zM84 607h1v1h-1zM86 607h2v1h-2zM90 607h4v1h-4zM97 607h1v1h-1zM10 608h1v1h-1zM12 608h2v1h-2zM15 608h2v1h-2zM19 608h2v1h-2zM22 608h2v1h-2zM67 608h1v1h-1zM72 608h2v1h-2zM82 608h1v1h-1zM86 608h3v1h-3zM90 608h3v1h-3zM97 608h1v1h-1zM18 609h11v1h-11zM32 609h1v1h-1zM38 609h2v1h-2zM62 609h1v1h-1zM67 609h2v1h-2zM72 609h2v1h-2zM75 609h5v1h-5zM85 609h1v1h-1zM87 609h1v1h-1zM89 609h1v1h-1zM94 609h2v1h-2zM19 610h14v1h-14zM38 610h2v1h-2zM61 610h1v1h-1zM65 610h1v1h-1zM67 610h3v1h-3zM72 610h8v1h-8zM82 610h2v1h-2zM19 611h1v1h-1zM22 611h4v1h-4zM27 611h3v1h-3zM32 611h2v1h-2zM36 611h2v1h-2zM40 611h1v1h-1zM45 611h1v1h-1zM48 611h1v1h-1zM56 611h2v1h-2zM62 611h2v1h-2zM66 611h14v1h-14zM82 611h2v1h-2zM86 611h1v1h-1zM18 612h2v1h-2zM23 612h8v1h-8zM32 612h6v1h-6zM40 612h2v1h-2zM44 612h2v1h-2zM48 612h2v1h-2zM56 612h2v1h-2zM62 612h2v1h-2zM65 612h13v1h-13zM82 612h2v1h-2zM87 612h1v1h-1zM24 613h2v1h-2zM28 613h7v1h-7zM36 613h6v1h-6zM44 613h4v1h-4zM50 613h1v1h-1zM53 613h1v1h-1zM56 613h10v1h-10zM68 613h4v1h-4zM28 614h1v1h-1zM30 614h21v1h-21zM52 614h2v1h-2zM56 614h11v1h-11zM68 614h2v1h-2zM22 615h1v1h-1zM28 615h2v1h-2zM31 615h5v1h-5zM37 615h3v1h-3zM41 615h8v1h-8zM50 615h2v1h-2zM53 615h3v1h-3zM57 615h7v1h-7zM65 615h2v1h-2zM68 615h2v1h-2zM23 616h1v1h-1zM29 616h1v1h-1zM32 616h3v1h-3zM39 616h1v1h-1zM44 616h1v1h-1zM46 616h2v1h-2zM50 616h2v1h-2zM54 616h3v1h-3zM58 616h3v1h-3zM62 616h3v1h-3zM68 616h2v1h-2zM29 617h1v1h-1zM31 617h3v1h-3zM36 617h1v1h-1zM40 617h2v1h-2zM45 617h1v1h-1zM52 617h2v1h-2zM71 617h1v1h-1zM32 618h2v1h-2zM41 618h1v1h-1zM46 619h1v1h-1zM46 620h1v1h-1z" fill="#000"/><path d="M685 28h1v1h-1zM689 28h1v1h-1zM681 29h1v1h-1zM683 29h4v1h-4zM688 29h2v1h-2zM691 29h1v1h-1zM742 29h1v1h-1zM744 29h2v1h-2zM747 29h1v1h-1zM819 29h1v1h-1zM850 29h1v1h-1zM680 30h4v1h-4zM685 30h9v1h-9zM718 30h2v1h-2zM729 30h5v1h-5zM736 30h7v1h-7zM745 30h3v1h-3zM750 30h2v1h-2zM754 30h5v1h-5zM761 30h1v1h-1zM764 30h6v1h-6zM771 30h1v1h-1zM778 30h1v1h-1zM780 30h2v1h-2zM784 30h1v1h-1zM800 30h1v1h-1zM804 30h2v1h-2zM808 30h1v1h-1zM810 30h1v1h-1zM812 30h5v1h-5zM822 30h4v1h-4zM827 30h5v1h-5zM833 30h1v1h-1zM835 30h3v1h-3zM839 30h2v1h-2zM846 30h4v1h-4zM854 30h2v1h-2zM902 30h1v1h-1zM679 31h16v1h-16zM713 31h1v1h-1zM715 31h1v1h-1zM718 31h2v1h-2zM726 31h1v1h-1zM728 31h6v1h-6zM736 31h16v1h-16zM753 31h19v1h-19zM775 31h11v1h-11zM788 31h1v1h-1zM790 31h2v1h-2zM795 31h1v1h-1zM802 31h1v1h-1zM804 31h2v1h-2zM807 31h4v1h-4zM812 31h7v1h-7zM822 31h19v1h-19zM843 31h1v1h-1zM845 31h8v1h-8zM854 31h3v1h-3zM858 31h2v1h-2zM879 31h1v1h-1zM881 31h1v1h-1zM895 31h1v1h-1zM900 31h3v1h-3zM908 31h2v1h-2zM912 31h1v1h-1zM917 31h1v1h-1zM919 31h1v1h-1zM679 32h33v1h-33zM713 32h7v1h-7zM721 32h64v1h-64zM786 32h5v1h-5zM792 32h6v1h-6zM799 32h6v1h-6zM806 32h8v1h-8zM815 32h29v1h-29zM846 32h19v1h-19zM873 32h2v1h-2zM881 32h3v1h-3zM885 32h3v1h-3zM894 32h2v1h-2zM897 32h7v1h-7zM905 32h1v1h-1zM907 32h2v1h-2zM910 32h2v1h-2zM914 32h6v1h-6zM677 33h1v1h-1zM679 33h2v1h-2zM682 33h29v1h-29zM712 33h9v1h-9zM722 33h13v1h-13zM736 33h29v1h-29zM766 33h24v1h-24zM792 33h6v1h-6zM800 33h14v1h-14zM815 33h43v1h-43zM859 33h1v1h-1zM861 33h7v1h-7zM869 33h1v1h-1zM871 33h5v1h-5zM880 33h41v1h-41zM922 33h1v1h-1zM678 34h25v1h-25zM704 34h34v1h-34zM740 34h39v1h-39zM780 34h12v1h-12zM793 34h7v1h-7zM801 34h5v1h-5zM807 34h8v1h-8zM816 34h30v1h-30zM848 34h36v1h-36zM885 34h11v1h-11zM897 34h6v1h-6zM904 34h17v1h-17zM922 34h1v1h-1zM924 34h1v1h-1zM677 35h25v1h-25zM703 35h29v1h-29zM733 35h2v1h-2zM736 35h10v1h-10zM747 35h53v1h-53zM801 35h7v1h-7zM810 35h36v1h-36zM848 35h27v1h-27zM876 35h7v1h-7zM884 35h19v1h-19zM904 35h8v1h-8zM913 35h10v1h-10zM924 35h1v1h-1zM677 36h37v1h-37zM716 36h5v1h-5zM722 36h31v1h-31zM754 36h4v1h-4zM759 36h7v1h-7zM767 36h12v1h-12zM780 36h73v1h-73zM854 36h6v1h-6zM861 36h8v1h-8zM870 36h11v1h-11zM882 36h36v1h-36zM919 36h6v1h-6zM677 37h4v1h-4zM682 37h5v1h-5zM688 37h11v1h-11zM700 37h7v1h-7zM708 37h8v1h-8zM718 37h18v1h-18zM737 37h22v1h-22zM760 37h45v1h-45zM808 37h57v1h-57zM866 37h3v1h-3zM870 37h6v1h-6zM877 37h25v1h-25zM904 37h20v1h-20zM678 38h74v1h-74zM753 38h11v1h-11zM765 38h59v1h-59zM825 38h38v1h-38zM864 38h6v1h-6zM871 38h16v1h-16zM888 38h4v1h-4zM895 38h3v1h-3zM902 38h3v1h-3zM908 38h2v1h-2zM912 38h3v1h-3zM916 38h7v1h-7zM678 39h9v1h-9zM688 39h12v1h-12zM702 39h14v1h-14zM717 39h5v1h-5zM724 39h2v1h-2zM728 39h4v1h-4zM733 39h4v1h-4zM738 39h3v1h-3zM742 39h2v1h-2zM746 39h6v1h-6zM756 39h3v1h-3zM761 39h1v1h-1zM763 39h1v1h-1zM766 39h4v1h-4zM771 39h7v1h-7zM779 39h3v1h-3zM783 39h11v1h-11zM795 39h2v1h-2zM798 39h1v1h-1zM800 39h2v1h-2zM804 39h5v1h-5zM810 39h13v1h-13zM827 39h5v1h-5zM834 39h9v1h-9zM844 39h7v1h-7zM852 39h10v1h-10zM863 39h3v1h-3zM867 39h1v1h-1zM870 39h8v1h-8zM879 39h3v1h-3zM888 39h4v1h-4zM895 39h2v1h-2zM902 39h2v1h-2zM905 39h1v1h-1zM908 39h2v1h-2zM913 39h1v1h-1zM916 39h3v1h-3zM920 39h2v1h-2zM678 40h24v1h-24zM703 40h21v1h-21zM743 40h1v1h-1zM745 40h1v1h-1zM752 40h1v1h-1zM755 40h1v1h-1zM757 40h1v1h-1zM771 40h5v1h-5zM781 40h3v1h-3zM790 40h6v1h-6zM799 40h4v1h-4zM806 40h3v1h-3zM810 40h1v1h-1zM812 40h2v1h-2zM816 40h2v1h-2zM820 40h2v1h-2zM824 40h2v1h-2zM829 40h2v1h-2zM836 40h2v1h-2zM843 40h1v1h-1zM858 40h2v1h-2zM861 40h2v1h-2zM864 40h2v1h-2zM887 40h1v1h-1zM890 40h1v1h-1zM920 40h1v1h-1zM679 41h15v1h-15zM695 41h8v1h-8zM706 41h1v1h-1zM710 41h2v1h-2zM713 41h2v1h-2zM716 41h2v1h-2zM795 41h1v1h-1zM862 41h1v1h-1zM865 41h1v1h-1zM686 42h6v1h-6zM688 43h1v1h-1zM690 43h1v1h-1zM760 78h1v1h-1zM762 78h3v1h-3zM759 79h7v1h-7zM760 80h4v1h-4zM765 80h3v1h-3zM770 80h1v1h-1zM772 80h2v1h-2zM798 80h2v1h-2zM802 80h3v1h-3zM808 80h2v1h-2zM812 80h2v1h-2zM816 80h3v1h-3zM821 80h2v1h-2zM824 80h2v1h-2zM827 80h1v1h-1zM830 80h1v1h-1zM837 80h1v1h-1zM759 81h16v1h-16zM778 81h1v1h-1zM784 81h4v1h-4zM791 81h1v1h-1zM793 81h1v1h-1zM798 81h2v1h-2zM801 81h5v1h-5zM808 81h7v1h-7zM816 81h25v1h-25zM844 81h2v1h-2zM848 81h2v1h-2zM864 81h2v1h-2zM871 81h1v1h-1zM873 81h1v1h-1zM878 81h2v1h-2zM881 81h3v1h-3zM758 82h22v1h-22zM781 82h5v1h-5zM787 82h43v1h-43zM831 82h7v1h-7zM839 82h11v1h-11zM854 82h4v1h-4zM864 82h2v1h-2zM867 82h2v1h-2zM870 82h4v1h-4zM876 82h1v1h-1zM879 82h2v1h-2zM886 82h1v1h-1zM760 83h10v1h-10zM771 83h18v1h-18zM790 83h8v1h-8zM800 83h6v1h-6zM807 83h9v1h-9zM817 83h1v1h-1zM819 83h31v1h-31zM853 83h9v1h-9zM863 83h3v1h-3zM868 83h6v1h-6zM875 83h7v1h-7zM883 83h4v1h-4zM760 84h22v1h-22zM783 84h58v1h-58zM842 84h14v1h-14zM858 84h11v1h-11zM870 84h9v1h-9zM880 84h8v1h-8zM765 85h13v1h-13zM779 85h82v1h-82zM862 85h6v1h-6zM870 85h11v1h-11zM882 85h4v1h-4zM887 85h1v1h-1zM766 86h2v1h-2zM769 86h1v1h-1zM771 86h15v1h-15zM787 86h13v1h-13zM801 86h4v1h-4zM806 86h2v1h-2zM810 86h3v1h-3zM818 86h6v1h-6zM826 86h10v1h-10zM837 86h1v1h-1zM839 86h15v1h-15zM855 86h1v1h-1zM858 86h15v1h-15zM874 86h9v1h-9zM884 86h4v1h-4zM774 87h21v1h-21zM796 87h3v1h-3zM800 87h1v1h-1zM803 87h2v1h-2zM811 87h1v1h-1zM813 87h1v1h-1zM818 87h1v1h-1zM820 87h2v1h-2zM826 87h1v1h-1zM828 87h2v1h-2zM834 87h3v1h-3zM840 87h10v1h-10zM860 87h3v1h-3zM865 87h3v1h-3zM869 87h2v1h-2zM872 87h1v1h-1zM874 87h5v1h-5zM880 87h2v1h-2zM884 87h3v1h-3zM776 88h16v1h-16zM793 88h1v1h-1zM797 88h1v1h-1zM825 88h1v1h-1zM830 88h1v1h-1zM846 88h2v1h-2zM857 88h3v1h-3zM862 88h1v1h-1zM870 88h3v1h-3zM878 88h2v1h-2zM777 89h17v1h-17zM859 89h1v1h-1zM872 89h1v1h-1zM777 90h6v1h-6zM784 90h7v1h-7zM792 90h2v1h-2zM778 91h3v1h-3zM782 91h1v1h-1zM784 91h10v1h-10zM780 92h4v1h-4zM785 92h7v1h-7zM780 93h4v1h-4zM786 93h3v1h-3zM790 93h1v1h-1zM784 94h2v1h-2z" fill="#000"/></svg>
<div id="con" class="a">
  <div class="a" style="left:0;top:0;width:2px;height:335px;background:#f4f4f4"></div>
  <div class="a" style="left:0;top:0;width:668px;height:2px;background:#f0f0f0"></div>
  <div class="a" style="left:2px;top:2px;width:1px;height:333px;background:#c4c9cf"></div>
  <div class="a" style="left:2px;top:2px;width:666px;height:1px;background:#c4c9cf"></div>
  <div class="a" style="left:3px;top:3px;width:662px;height:1px;background:#fbfcfd"></div>
  <div class="a" style="left:3px;top:3px;width:1px;height:330px;background:#fbfcfd"></div>
  <div id="contitle" class="a"></div>
  <div class="a" style="left:4px;top:27px;width:660px;height:1px;background:#eef2f6"></div>
  <div class="a" style="left:4px;top:28px;width:660px;height:1px;background:#9aa3ad"></div>
  <div class="a" style="left:663px;top:2px;width:3px;height:333px;background:#f2f4f6"></div><div class="a" style="left:666px;top:2px;width:2px;height:333px;background:linear-gradient(90deg,#b0b0b0,#6e6e6e)"></div>
  <div class="a" style="left:2px;top:332px;width:666px;height:3px;background:linear-gradient(#d0d0d0,#8c8c8c)"></div>
  <!-- icon -->
  <div class="a" style="left:8px;top:9px;width:16px;height:12px;background:#0f1a2c;border-top:2px solid #3a78c0;border-radius:1px"></div>
  <div class="a" style="left:10px;top:10px;font:bold 9px 'Liberation Sans',sans-serif;color:#fff;letter-spacing:-0.3px">C:\</div>
  <div class="a" style="left:30px;top:9px;font-size:12px;letter-spacing:-0.15px;color:#1e2a3a;white-space:nowrap">C:\Program Files\Atmel\AVR Tools\STK500\Stk500.exe</div>
  <!-- title buttons -->
  <div class="a tbtn" style="left:613px"><div class="a" style="left:5px;top:11px;width:6px;height:2px;background:#000"></div></div>
  <div class="a tbtn" style="left:629px"><div class="a" style="left:3px;top:4px;width:10px;height:9px;border:1px solid #000;border-top-width:2px"></div></div>
  <div class="a tbtn" style="left:646px"><svg class="a" style="left:3px;top:4px" width="10" height="10"><path d="M1 1L9 9M9 1L1 9" stroke="#000" stroke-width="2"/></svg></div>
  <div id="conbody" class="a">STK500 command line programmer, v 2.3 Atmel Corp (C) 2004-2009.

Connected to STK500 v2 on port com3
Device parameters loaded
Programming mode entered
Device erased
FLASH input file C:\DOCUME~1\9335~1\C316~1\333\333\NONAME1.HEX read
Programming FLASH... FLASH programmed
Reading FLASH...</div>
  <div id="cscroll" class="a">
    <div class="a sbtn" style="left:0;top:0"><svg class="a" style="left:4px;top:6px" width="9" height="5"><path d="M0 5L4.5 0.5L9 5Z" fill="#000"/></svg></div>
    <div class="a sbtn" style="left:0;top:17px;height:22px"></div>
    <div class="a sbtn" style="left:0;top:284px"><svg class="a" style="left:4px;top:6px" width="9" height="5"><path d="M0 0L4.5 4.5L9 0Z" fill="#000"/></svg></div>
  </div>
</div>
</body></html>
